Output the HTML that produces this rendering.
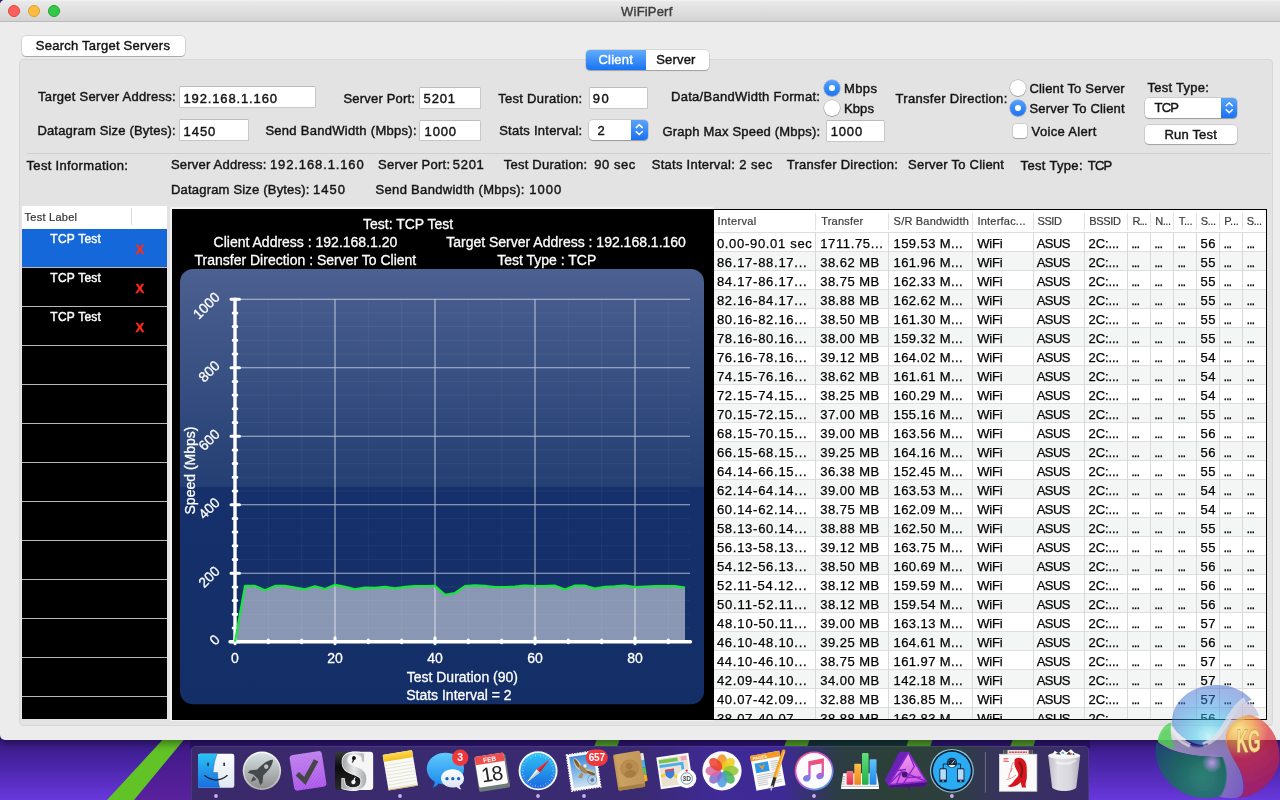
<!DOCTYPE html>
<html lang="en">
<head>
<meta charset="utf-8">
<title>WiFiPerf</title>
<style>
html,body{margin:0;padding:0;}
body{width:1280px;height:800px;overflow:hidden;position:relative;font-family:"Liberation Sans",sans-serif;background:#4a24a8;}
.abs{position:absolute;}
.t{position:absolute;white-space:pre;-webkit-text-stroke:0.42px currentColor;}
#wall{position:absolute;left:0;top:0;width:1280px;height:800px;}
#win{position:absolute;left:0;top:0;width:1280px;height:739.5px;background:#ececec;border-radius:5px 0 0 5px;overflow:hidden;box-shadow:0 3px 10px rgba(0,0,0,.45);}
#tbar{position:absolute;left:0;top:0;width:1280px;height:21px;background:linear-gradient(#f3f3f3 0,#eaeaea 1.2px,#d3d3d3);border-bottom:1px solid #bababa;box-sizing:content-box;}
.tl{position:absolute;top:5px;width:12px;height:12px;border-radius:50%;box-sizing:border-box;}
#gbox{position:absolute;left:19px;top:58.5px;width:1254px;height:667px;background:#e3e3e3;border:1px solid #d8d8d8;border-radius:4px;box-sizing:border-box;}
.fld{position:absolute;background:#fff;border:1px solid #c8c8c8;border-top-color:#bcbcbc;border-radius:1.5px;box-sizing:border-box;}
.btn{position:absolute;background:#fff;border-radius:4px;box-sizing:border-box;box-shadow:0 0 0 .5px rgba(0,0,0,.18),0 1px 1px rgba(0,0,0,.22);}
.radio{position:absolute;width:16px;height:16px;border-radius:50%;box-sizing:border-box;background:#fff;box-shadow:0 0 0 .5px rgba(0,0,0,.25),0 1px 1px rgba(0,0,0,.2);}
.radio.on{background:linear-gradient(#55a2fb,#1a73f3);box-shadow:0 0 0 .5px rgba(20,80,200,.5),0 1px 1px rgba(0,0,0,.2);}
.radio.on::after{content:"";position:absolute;left:5px;top:5px;width:6px;height:6px;border-radius:50%;background:#fff;}
.sel{position:absolute;background:#fff;border-radius:4px;box-sizing:border-box;box-shadow:0 0 0 .5px rgba(0,0,0,.2),0 1px 1px rgba(0,0,0,.25);overflow:hidden;}
.sel i{position:absolute;right:0;top:0;bottom:0;width:16.5px;background:linear-gradient(#58a4fb,#1a72f2);}
#tabtext .t{-webkit-text-stroke-width:0.25px;}
.hl{position:absolute;height:1px;background:#cfcfcf;}
</style>
</head>
<body>
<svg id="wall" viewBox="0 0 1280 800">
<defs>
<linearGradient id="wv" x1="0" y1="736" x2="0" y2="800" gradientUnits="userSpaceOnUse"><stop offset="0" stop-color="#37197f"/><stop offset="0.45" stop-color="#4a25a8"/><stop offset="1" stop-color="#6838dc"/></linearGradient>
<linearGradient id="wv2" x1="0" y1="736" x2="0" y2="800" gradientUnits="userSpaceOnUse"><stop offset="0" stop-color="#3c1784"/><stop offset="1" stop-color="#5a229e"/></linearGradient>
</defs>
<rect x="0" y="0" width="1280" height="800" fill="url(#wv)"/>
<polygon points="187,736 200,736 200,800 134,800" fill="url(#wv2)"/>
<polygon points="166,736 187,736 134,800 107,800" fill="#62c326"/>
<rect x="190" y="736" width="900" height="12" fill="#2c1470"/>
<polygon points="811,736 911,736 905,747 805,747" fill="#15343a"/>
<polygon points="598,736 621,736 617,747 594,747" fill="#4f9a2a"/>
<polygon points="788,736 811,736 807,747 784,747" fill="#4f9a2a"/>
<polygon points="910,736 934,736 930,747 906,747" fill="#4f9a2a"/>
<polygon points="1014,736 1037,736 1033,747 1010,747" fill="#4f9a2a"/>
</svg>

<div id="win">
 <div id="tbar">
  <div class="tl" style="left:8px;background:#fc605c;border:.5px solid #e0443e;"></div>
  <div class="tl" style="left:28px;background:#fdbc40;border:.5px solid #dea123;"></div>
  <div class="tl" style="left:48px;background:#34c84a;border:.5px solid #1ba62d;"></div>
 </div>
 <div id="gbox"></div>
 <!-- search button -->
 <div class="btn" style="left:21.5px;top:36px;width:163px;height:19.5px;"></div>
 <!-- tabs -->
 <div class="btn" style="left:585.5px;top:49.5px;width:123px;height:20px;overflow:hidden;"><div class="abs" style="left:0;top:0;width:60px;height:20px;background:linear-gradient(#63acfb,#1873f4);"></div></div>
 <!-- fields -->
 <div class="fld" style="left:179px;top:86.2px;width:136.5px;height:21.5px;"></div>
 <div class="fld" style="left:419.4px;top:87.4px;width:61.6px;height:21.4px;"></div>
 <div class="fld" style="left:588.9px;top:87.4px;width:59px;height:21.4px;"></div>
 <div class="fld" style="left:179px;top:119.4px;width:69.8px;height:21.4px;"></div>
 <div class="fld" style="left:419.4px;top:119.5px;width:61.6px;height:21.4px;"></div>
 <div class="fld" style="left:825.6px;top:120.4px;width:59.6px;height:21.4px;"></div>
 <!-- selects -->
 <div class="sel" style="left:589px;top:120px;width:58.6px;height:20px;"><i></i>
  <svg class="abs" style="right:0;top:0.4px" width="16.5" height="19.2" viewBox="0 0 16.5 19.2"><path d="M5.2 7.6 8.25 4.6 11.3 7.6M5.2 11.6 8.25 14.6 11.3 11.6" fill="none" stroke="#fff" stroke-width="1.5" stroke-linecap="round" stroke-linejoin="round"/></svg></div>
 <div class="sel" style="left:1145px;top:97.5px;width:92px;height:20px;"><i></i>
  <svg class="abs" style="right:0;top:0" width="16.5" height="19.4" viewBox="0 0 16.5 19.4"><path d="M5.2 7.7 8.25 4.7 11.3 7.7M5.2 11.7 8.25 14.7 11.3 11.7" fill="none" stroke="#fff" stroke-width="1.5" stroke-linecap="round" stroke-linejoin="round"/></svg></div>
 <!-- run test -->
 <div class="btn" style="left:1145px;top:124.8px;width:92px;height:19.4px;"></div>
 <!-- radios -->
 <div class="radio on" style="left:824.4px;top:79.8px;"></div>
 <div class="radio" style="left:824.4px;top:99.8px;"></div>
 <div class="radio" style="left:1009.8px;top:80.1px;"></div>
 <div class="radio on" style="left:1009.8px;top:100.1px;"></div>
 <!-- checkbox -->
 <div class="btn" style="left:1013px;top:124.4px;width:14px;height:14px;border-radius:3px;"></div>
 <!-- separator -->
 <div class="hl" style="left:27px;top:153px;width:1244px;"></div>

 <!-- list -->
 <div class="abs" style="left:21.8px;top:206.3px;width:145.5px;height:512.5px;background:#000;overflow:hidden;">
  <div class="abs" style="left:0;top:0;width:145.4px;height:22.4px;background:#fff;"></div>
  <div class="abs" style="left:109.7px;top:2px;width:1px;height:17px;background:#dcdcdc;"></div>
  <div class="abs" style="left:0;top:22.4px;width:145.4px;height:38.4px;background:#1568d9;"></div>
  <div class="abs" style="left:0;top:60.5px;width:145.4px;height:1.2px;background:#b9b9b9;"></div><div class="abs" style="left:0;top:99.6px;width:145.4px;height:1.2px;background:#b9b9b9;"></div><div class="abs" style="left:0;top:138.6px;width:145.4px;height:1.2px;background:#b9b9b9;"></div><div class="abs" style="left:0;top:177.7px;width:145.4px;height:1.2px;background:#b9b9b9;"></div><div class="abs" style="left:0;top:216.7px;width:145.4px;height:1.2px;background:#b9b9b9;"></div><div class="abs" style="left:0;top:255.8px;width:145.4px;height:1.2px;background:#b9b9b9;"></div><div class="abs" style="left:0;top:294.8px;width:145.4px;height:1.2px;background:#b9b9b9;"></div><div class="abs" style="left:0;top:333.9px;width:145.4px;height:1.2px;background:#b9b9b9;"></div><div class="abs" style="left:0;top:372.9px;width:145.4px;height:1.2px;background:#b9b9b9;"></div><div class="abs" style="left:0;top:411.9px;width:145.4px;height:1.2px;background:#b9b9b9;"></div><div class="abs" style="left:0;top:451.0px;width:145.4px;height:1.2px;background:#b9b9b9;"></div><div class="abs" style="left:0;top:490.0px;width:145.4px;height:1.2px;background:#b9b9b9;"></div>
 </div>
 <!-- graph panel + table backgrounds -->
 <div class="abs" style="left:169.8px;top:206.8px;width:543.4px;height:514px;background:#f1f1f1;"></div>
 <div class="abs" style="left:172px;top:209px;width:541px;height:510.6px;background:#000;"></div>
 <div class="abs" style="left:713px;top:208.6px;width:554px;height:511px;background:#000;"></div>
<div class="abs" style="left:714.2px;top:209.8px;width:551.6px;height:509px;background:#fff;overflow:hidden;">
<div class="abs" style="left:0;top:22.5px;width:552px;height:19px;background:#fff;border-top:1px solid #dedede;box-sizing:border-box;"></div>
<div class="abs" style="left:0;top:41.5px;width:552px;height:19px;background:#f4f5f5;border-top:1px solid #dedede;box-sizing:border-box;"></div>
<div class="abs" style="left:0;top:60.5px;width:552px;height:19px;background:#fff;border-top:1px solid #dedede;box-sizing:border-box;"></div>
<div class="abs" style="left:0;top:79.5px;width:552px;height:19px;background:#f4f5f5;border-top:1px solid #dedede;box-sizing:border-box;"></div>
<div class="abs" style="left:0;top:98.5px;width:552px;height:19px;background:#fff;border-top:1px solid #dedede;box-sizing:border-box;"></div>
<div class="abs" style="left:0;top:117.5px;width:552px;height:19px;background:#f4f5f5;border-top:1px solid #dedede;box-sizing:border-box;"></div>
<div class="abs" style="left:0;top:136.5px;width:552px;height:19px;background:#fff;border-top:1px solid #dedede;box-sizing:border-box;"></div>
<div class="abs" style="left:0;top:155.5px;width:552px;height:19px;background:#f4f5f5;border-top:1px solid #dedede;box-sizing:border-box;"></div>
<div class="abs" style="left:0;top:174.5px;width:552px;height:19px;background:#fff;border-top:1px solid #dedede;box-sizing:border-box;"></div>
<div class="abs" style="left:0;top:193.5px;width:552px;height:19px;background:#f4f5f5;border-top:1px solid #dedede;box-sizing:border-box;"></div>
<div class="abs" style="left:0;top:212.5px;width:552px;height:19px;background:#fff;border-top:1px solid #dedede;box-sizing:border-box;"></div>
<div class="abs" style="left:0;top:231.5px;width:552px;height:19px;background:#f4f5f5;border-top:1px solid #dedede;box-sizing:border-box;"></div>
<div class="abs" style="left:0;top:250.5px;width:552px;height:19px;background:#fff;border-top:1px solid #dedede;box-sizing:border-box;"></div>
<div class="abs" style="left:0;top:269.5px;width:552px;height:19px;background:#f4f5f5;border-top:1px solid #dedede;box-sizing:border-box;"></div>
<div class="abs" style="left:0;top:288.5px;width:552px;height:19px;background:#fff;border-top:1px solid #dedede;box-sizing:border-box;"></div>
<div class="abs" style="left:0;top:307.5px;width:552px;height:19px;background:#f4f5f5;border-top:1px solid #dedede;box-sizing:border-box;"></div>
<div class="abs" style="left:0;top:326.5px;width:552px;height:19px;background:#fff;border-top:1px solid #dedede;box-sizing:border-box;"></div>
<div class="abs" style="left:0;top:345.5px;width:552px;height:19px;background:#f4f5f5;border-top:1px solid #dedede;box-sizing:border-box;"></div>
<div class="abs" style="left:0;top:364.5px;width:552px;height:19px;background:#fff;border-top:1px solid #dedede;box-sizing:border-box;"></div>
<div class="abs" style="left:0;top:383.5px;width:552px;height:19px;background:#f4f5f5;border-top:1px solid #dedede;box-sizing:border-box;"></div>
<div class="abs" style="left:0;top:402.5px;width:552px;height:19px;background:#fff;border-top:1px solid #dedede;box-sizing:border-box;"></div>
<div class="abs" style="left:0;top:421.5px;width:552px;height:19px;background:#f4f5f5;border-top:1px solid #dedede;box-sizing:border-box;"></div>
<div class="abs" style="left:0;top:440.5px;width:552px;height:19px;background:#fff;border-top:1px solid #dedede;box-sizing:border-box;"></div>
<div class="abs" style="left:0;top:459.5px;width:552px;height:19px;background:#f4f5f5;border-top:1px solid #dedede;box-sizing:border-box;"></div>
<div class="abs" style="left:0;top:478.5px;width:552px;height:19px;background:#fff;border-top:1px solid #dedede;box-sizing:border-box;"></div>
<div class="abs" style="left:0;top:497.5px;width:552px;height:19px;background:#f4f5f5;border-top:1px solid #dedede;box-sizing:border-box;"></div>
<div class="abs" style="left:100.8px;top:22.5px;width:1px;height:490px;background:#d9d9d9;"></div>
<div class="abs" style="left:100.8px;top:3px;width:1px;height:17px;background:#e2e2e2;"></div>
<div class="abs" style="left:173.9px;top:22.5px;width:1px;height:490px;background:#d9d9d9;"></div>
<div class="abs" style="left:173.9px;top:3px;width:1px;height:17px;background:#e2e2e2;"></div>
<div class="abs" style="left:257.9px;top:22.5px;width:1px;height:490px;background:#d9d9d9;"></div>
<div class="abs" style="left:257.9px;top:3px;width:1px;height:17px;background:#e2e2e2;"></div>
<div class="abs" style="left:318.7px;top:22.5px;width:1px;height:490px;background:#d9d9d9;"></div>
<div class="abs" style="left:318.7px;top:3px;width:1px;height:17px;background:#e2e2e2;"></div>
<div class="abs" style="left:370.0px;top:22.5px;width:1px;height:490px;background:#d9d9d9;"></div>
<div class="abs" style="left:370.0px;top:3px;width:1px;height:17px;background:#e2e2e2;"></div>
<div class="abs" style="left:412.8px;top:22.5px;width:1px;height:490px;background:#d9d9d9;"></div>
<div class="abs" style="left:412.8px;top:3px;width:1px;height:17px;background:#e2e2e2;"></div>
<div class="abs" style="left:435.8px;top:22.5px;width:1px;height:490px;background:#d9d9d9;"></div>
<div class="abs" style="left:435.8px;top:3px;width:1px;height:17px;background:#e2e2e2;"></div>
<div class="abs" style="left:458.9px;top:22.5px;width:1px;height:490px;background:#d9d9d9;"></div>
<div class="abs" style="left:458.9px;top:3px;width:1px;height:17px;background:#e2e2e2;"></div>
<div class="abs" style="left:482.0px;top:22.5px;width:1px;height:490px;background:#d9d9d9;"></div>
<div class="abs" style="left:482.0px;top:3px;width:1px;height:17px;background:#e2e2e2;"></div>
<div class="abs" style="left:504.9px;top:22.5px;width:1px;height:490px;background:#d9d9d9;"></div>
<div class="abs" style="left:504.9px;top:3px;width:1px;height:17px;background:#e2e2e2;"></div>
<div class="abs" style="left:527.9px;top:22.5px;width:1px;height:490px;background:#d9d9d9;"></div>
<div class="abs" style="left:527.9px;top:3px;width:1px;height:17px;background:#e2e2e2;"></div>
</div>
 <svg class="abs" style="left:0;top:0" width="1280" height="739" viewBox="0 0 1280 739" font-family="'Liberation Sans', sans-serif">
 <defs><linearGradient id="gg" x1="0" y1="0" x2="0" y2="1">
<stop offset="0" stop-color="#4c6091"/><stop offset="0.5" stop-color="#243f73"/><stop offset="0.5" stop-color="#15306a"/><stop offset="1" stop-color="#142f68"/></linearGradient></defs>
<rect x="180" y="269" width="524" height="435.3" rx="13" ry="13" fill="url(#gg)"/>
<path d="M235.0 628.0H690.0M235.0 614.3H690.0M235.0 600.6H690.0M235.0 586.9H690.0M235.0 559.5H690.0M235.0 545.8H690.0M235.0 532.1H690.0M235.0 518.4H690.0M235.0 491.0H690.0M235.0 477.3H690.0M235.0 463.6H690.0M235.0 449.9H690.0M235.0 422.5H690.0M235.0 408.8H690.0M235.0 395.1H690.0M235.0 381.4H690.0M235.0 354.0H690.0M235.0 340.3H690.0M235.0 326.6H690.0M235.0 312.9H690.0M268.3 299.2V641.7M301.7 299.2V641.7M368.3 299.2V641.7M401.7 299.2V641.7M468.3 299.2V641.7M501.7 299.2V641.7M568.3 299.2V641.7M601.7 299.2V641.7M668.3 299.2V641.7" stroke="#fff" stroke-opacity="0.05" stroke-width="1" fill="none"/>
<path d="M235.0 573.2H690.0M235.0 504.7H690.0M235.0 436.2H690.0M235.0 367.7H690.0M235.0 299.2H690.0M335.0 299.2V641.7M435.0 299.2V641.7M535.0 299.2V641.7M635.0 299.2V641.7" stroke="#fff" stroke-opacity="0.62" stroke-width="1.1" fill="none"/>
<path d="M235.0 299.2V641.7M230.0 641.7H690.5" stroke="#fff" stroke-width="3.4" stroke-linecap="round" fill="none"/>
<path d="M231.0 641.7h8.5M233.2 628.0h3.6M233.2 614.3h3.6M233.2 600.6h3.6M233.2 586.9h3.6M231.0 573.2h8.5M233.2 559.5h3.6M233.2 545.8h3.6M233.2 532.1h3.6M233.2 518.4h3.6M231.0 504.7h8.5M233.2 491.0h3.6M233.2 477.3h3.6M233.2 463.6h3.6M233.2 449.9h3.6M231.0 436.2h8.5M233.2 422.5h3.6M233.2 408.8h3.6M233.2 395.1h3.6M233.2 381.4h3.6M231.0 367.7h8.5M233.2 354.0h3.6M233.2 340.3h3.6M233.2 326.6h3.6M233.2 312.9h3.6M231.0 299.2h8.5M235.0 637.7v6M268.3 640.1v2.6M301.7 640.1v2.6M335.0 637.7v6M368.3 640.1v2.6M401.7 640.1v2.6M435.0 637.7v6M468.3 640.1v2.6M501.7 640.1v2.6M535.0 637.7v6M568.3 640.1v2.6M601.7 640.1v2.6M635.0 637.7v6M668.3 640.1v2.6" stroke="#fff" stroke-width="3" stroke-linecap="round" fill="none"/>
<polygon points="235.0,641.7 245.0,585.9 255.0,585.9 265.0,590.3 275.0,585.9 285.0,585.9 295.0,587.6 305.0,589.3 315.0,586.2 325.0,589.0 335.0,584.8 345.0,586.9 355.0,589.3 365.0,587.6 375.0,587.9 385.0,586.9 395.0,588.3 405.0,586.9 415.0,586.2 425.0,586.0 435.0,585.9 445.0,594.8 455.0,593.0 465.0,586.2 475.0,585.3 485.0,585.8 495.0,587.1 505.0,587.0 515.0,586.7 525.0,585.6 535.0,586.0 545.0,586.2 555.0,585.7 565.0,589.5 575.0,585.5 585.0,585.7 595.0,588.6 605.0,586.8 615.0,586.3 625.0,585.5 635.0,587.1 645.0,586.5 655.0,586.0 665.0,586.1 675.0,586.2 685.0,587.6 685.0,641.7 235.0,641.7" fill="#fff" fill-opacity="0.5"/>
<polyline points="235.0,641.7 245.0,585.9 255.0,585.9 265.0,590.3 275.0,585.9 285.0,585.9 295.0,587.6 305.0,589.3 315.0,586.2 325.0,589.0 335.0,584.8 345.0,586.9 355.0,589.3 365.0,587.6 375.0,587.9 385.0,586.9 395.0,588.3 405.0,586.9 415.0,586.2 425.0,586.0 435.0,585.9 445.0,594.8 455.0,593.0 465.0,586.2 475.0,585.3 485.0,585.8 495.0,587.1 505.0,587.0 515.0,586.7 525.0,585.6 535.0,586.0 545.0,586.2 555.0,585.7 565.0,589.5 575.0,585.5 585.0,585.7 595.0,588.6 605.0,586.8 615.0,586.3 625.0,585.5 635.0,587.1 645.0,586.5 655.0,586.0 665.0,586.1 675.0,586.2 685.0,587.6" fill="none" stroke="#16e83a" stroke-width="2.2" stroke-linejoin="round"/>
<g fill="#fff" font-size="14px" stroke="#fff" stroke-width="0.3">
<text transform="translate(217.2 636.9) rotate(-45)" text-anchor="end" dy="0.36em">0</text>
<text transform="translate(217.2 568.4) rotate(-45)" text-anchor="end" dy="0.36em">200</text>
<text transform="translate(217.2 499.9) rotate(-45)" text-anchor="end" dy="0.36em">400</text>
<text transform="translate(217.2 431.4) rotate(-45)" text-anchor="end" dy="0.36em">600</text>
<text transform="translate(217.2 362.9) rotate(-45)" text-anchor="end" dy="0.36em">800</text>
<text transform="translate(217.2 294.4) rotate(-45)" text-anchor="end" dy="0.36em">1000</text>
<text x="235.0" y="662.6" text-anchor="middle">0</text>
<text x="335.0" y="662.6" text-anchor="middle">20</text>
<text x="435.0" y="662.6" text-anchor="middle">40</text>
<text x="535.0" y="662.6" text-anchor="middle">60</text>
<text x="635.0" y="662.6" text-anchor="middle">80</text>
<text transform="translate(195.3 470.5) rotate(-90)" text-anchor="middle">Speed (Mbps)</text>
<text x="406.7" y="682.3">Test Duration (90)</text>
<text x="406.2" y="700.4">Stats Interval = 2</text>
<text x="363" y="228.7">Test: TCP Test</text>
<text x="213.6" y="247">Client Address : 192.168.1.20</text>
<text x="446.2" y="246.8">Target Server Address : 192.168.1.160</text>
<text x="194.5" y="264.7">Transfer Direction : Server To Client</text>
<text x="497.2" y="264.8">Test Type : TCP</text>
</g>
 </svg>
 <span class="t" style="left:621.1px;top:3.0px;font-size:13px;line-height:17px;color:#3f3f3f;letter-spacing:0.19px;">WiFiPerf</span>
<span class="t" style="left:35.8px;top:36.7px;font-size:13px;line-height:17px;color:#141414;letter-spacing:0.25px;">Search Target Servers</span>
<span class="t" style="left:598.4px;top:50.7px;font-size:13px;line-height:17px;color:#fff;letter-spacing:0.23px;">Client</span>
<span class="t" style="left:656.2px;top:50.7px;font-size:13px;line-height:17px;color:#141414;letter-spacing:0.18px;">Server</span>
<span class="t" style="left:37.9px;top:88.4px;font-size:13px;line-height:17px;color:#141414;letter-spacing:0.26px;">Target Server Address:</span>
<span class="t" style="left:183.5px;top:89.7px;font-size:13px;line-height:17px;color:#141414;letter-spacing:0.86px;">192.168.1.160</span>
<span class="t" style="left:343.5px;top:89.5px;font-size:13px;line-height:17px;color:#141414;letter-spacing:0.19px;">Server Port:</span>
<span class="t" style="left:423.6px;top:90.2px;font-size:13px;line-height:17px;color:#141414;letter-spacing:0.83px;">5201</span>
<span class="t" style="left:498.2px;top:89.5px;font-size:13px;line-height:17px;color:#141414;letter-spacing:0.29px;">Test Duration:</span>
<span class="t" style="left:592.7px;top:90.2px;font-size:13px;line-height:17px;color:#141414;letter-spacing:1.53px;">90</span>
<span class="t" style="left:671.0px;top:87.6px;font-size:13px;line-height:17px;color:#141414;letter-spacing:0.28px;">Data/BandWidth Format:</span>
<span class="t" style="left:843.9px;top:80.0px;font-size:13px;line-height:17px;color:#141414;letter-spacing:0.43px;">Mbps</span>
<span class="t" style="left:843.9px;top:100.0px;font-size:13px;line-height:17px;color:#141414;letter-spacing:0.15px;">Kbps</span>
<span class="t" style="left:895.6px;top:90.1px;font-size:13px;line-height:17px;color:#141414;letter-spacing:0.29px;">Transfer Direction:</span>
<span class="t" style="left:1029.4px;top:80.1px;font-size:13px;line-height:17px;color:#141414;letter-spacing:0.20px;">Client To Server</span>
<span class="t" style="left:1029.4px;top:100.1px;font-size:13px;line-height:17px;color:#141414;letter-spacing:0.20px;">Server To Client</span>
<span class="t" style="left:1031.6px;top:122.9px;font-size:13px;line-height:17px;color:#141414;letter-spacing:0.33px;">Voice Alert</span>
<span class="t" style="left:1147.5px;top:79.2px;font-size:13px;line-height:17px;color:#141414;letter-spacing:0.25px;">Test Type:</span>
<span class="t" style="left:1154.4px;top:98.9px;font-size:13px;line-height:17px;color:#141414;letter-spacing:-0.70px;">TCP</span>
<span class="t" style="left:1164.4px;top:126.1px;font-size:13px;line-height:17px;color:#141414;letter-spacing:0.20px;">Run Test</span>
<span class="t" style="left:37.4px;top:121.8px;font-size:13px;line-height:17px;color:#141414;letter-spacing:0.18px;">Datagram Size (Bytes):</span>
<span class="t" style="left:183.5px;top:122.6px;font-size:13px;line-height:17px;color:#141414;letter-spacing:0.96px;">1450</span>
<span class="t" style="left:265.4px;top:122.4px;font-size:13px;line-height:17px;color:#141414;letter-spacing:0.28px;">Send BandWidth (Mbps):</span>
<span class="t" style="left:424.6px;top:123.0px;font-size:13px;line-height:17px;color:#141414;letter-spacing:0.83px;">1000</span>
<span class="t" style="left:499.2px;top:122.4px;font-size:13px;line-height:17px;color:#141414;letter-spacing:0.25px;">Stats Interval:</span>
<span class="t" style="left:597.5px;top:121.8px;font-size:13px;line-height:17px;color:#141414;">2</span>
<span class="t" style="left:662.5px;top:123.2px;font-size:13px;line-height:17px;color:#141414;letter-spacing:0.20px;">Graph Max Speed (Mbps):</span>
<span class="t" style="left:830.7px;top:123.4px;font-size:13px;line-height:17px;color:#141414;letter-spacing:0.86px;">1000</span>
<span class="t" style="left:26.5px;top:157.0px;font-size:13px;line-height:17px;color:#141414;letter-spacing:0.33px;">Test Information:</span>
<span class="t" style="left:171.0px;top:155.8px;font-size:13px;line-height:17px;color:#141414;letter-spacing:0.20px;">Server Address:</span>
<span class="t" style="left:270.0px;top:155.8px;font-size:13px;line-height:17px;color:#141414;letter-spacing:0.88px;">192.168.1.160</span>
<span class="t" style="left:378.0px;top:155.8px;font-size:13px;line-height:17px;color:#141414;letter-spacing:0.24px;">Server Port:</span>
<span class="t" style="left:452.8px;top:155.8px;font-size:13px;line-height:17px;color:#141414;letter-spacing:0.69px;">5201</span>
<span class="t" style="left:503.7px;top:155.8px;font-size:13px;line-height:17px;color:#141414;letter-spacing:0.24px;">Test Duration:</span>
<span class="t" style="left:594.3px;top:155.8px;font-size:13px;line-height:17px;color:#141414;letter-spacing:0.54px;">90 sec</span>
<span class="t" style="left:651.8px;top:156.0px;font-size:13px;line-height:17px;color:#141414;letter-spacing:0.25px;">Stats Interval:</span>
<span class="t" style="left:739.3px;top:156.0px;font-size:13px;line-height:17px;color:#141414;letter-spacing:0.46px;">2 sec</span>
<span class="t" style="left:786.8px;top:156.4px;font-size:13px;line-height:17px;color:#141414;letter-spacing:0.26px;">Transfer Direction:</span>
<span class="t" style="left:908.1px;top:156.4px;font-size:13px;line-height:17px;color:#141414;letter-spacing:0.24px;">Server To Client</span>
<span class="t" style="left:1020.6px;top:156.6px;font-size:13px;line-height:17px;color:#141414;letter-spacing:0.32px;">Test Type:</span>
<span class="t" style="left:1087.8px;top:156.6px;font-size:13px;line-height:17px;color:#141414;letter-spacing:-0.80px;">TCP</span>
<span class="t" style="left:171.0px;top:180.8px;font-size:13px;line-height:17px;color:#141414;letter-spacing:0.19px;">Datagram Size (Bytes):</span>
<span class="t" style="left:313.0px;top:180.8px;font-size:13px;line-height:17px;color:#141414;letter-spacing:1.03px;">1450</span>
<span class="t" style="left:375.6px;top:180.8px;font-size:13px;line-height:17px;color:#141414;letter-spacing:0.31px;">Send Bandwidth (Mbps):</span>
<span class="t" style="left:529.3px;top:180.8px;font-size:13px;line-height:17px;color:#141414;letter-spacing:1.03px;">1000</span>
<span class="t" style="left:24.6px;top:209.8px;font-size:11px;line-height:14px;color:#333;letter-spacing:0.25px;-webkit-text-stroke-width:0.2px;">Test Label</span>
<span class="t" style="left:50.3px;top:230.6px;font-size:12px;line-height:16px;color:#fff;letter-spacing:0.25px;">TCP Test</span>
<span class="t" style="left:135.6px;top:241.0px;font-size:13px;line-height:17px;color:#ff2a1c;font-weight:700;">X</span>
<span class="t" style="left:50.3px;top:269.6px;font-size:12px;line-height:16px;color:#fff;letter-spacing:0.25px;">TCP Test</span>
<span class="t" style="left:135.6px;top:280.0px;font-size:13px;line-height:17px;color:#ff2a1c;font-weight:700;">X</span>
<span class="t" style="left:50.3px;top:308.6px;font-size:12px;line-height:16px;color:#fff;letter-spacing:0.25px;">TCP Test</span>
<span class="t" style="left:135.6px;top:319.0px;font-size:13px;line-height:17px;color:#ff2a1c;font-weight:700;">X</span>
<span class="t" style="left:717.6px;top:213.5px;font-size:11px;line-height:14px;color:#3a3a3a;letter-spacing:0.37px;-webkit-text-stroke-width:0.2px;">Interval</span>
<span class="t" style="left:821.2px;top:213.5px;font-size:11px;line-height:14px;color:#3a3a3a;letter-spacing:0.22px;-webkit-text-stroke-width:0.2px;">Transfer</span>
<span class="t" style="left:893.6px;top:213.5px;font-size:11px;line-height:14px;color:#3a3a3a;letter-spacing:0.20px;-webkit-text-stroke-width:0.2px;">S/R Bandwidth</span>
<span class="t" style="left:977.5px;top:213.5px;font-size:11px;line-height:14px;color:#3a3a3a;letter-spacing:0.21px;-webkit-text-stroke-width:0.2px;">Interfac...</span>
<span class="t" style="left:1037.6px;top:213.5px;font-size:11px;line-height:14px;color:#3a3a3a;letter-spacing:-0.46px;-webkit-text-stroke-width:0.2px;">SSID</span>
<span class="t" style="left:1089.3px;top:213.5px;font-size:11px;line-height:14px;color:#3a3a3a;letter-spacing:-0.33px;-webkit-text-stroke-width:0.2px;">BSSID</span>
<span class="t" style="left:1132.4px;top:213.5px;font-size:11px;line-height:14px;color:#3a3a3a;letter-spacing:-0.77px;-webkit-text-stroke-width:0.2px;">R...</span>
<span class="t" style="left:1155.3px;top:213.5px;font-size:11px;line-height:14px;color:#3a3a3a;letter-spacing:-0.48px;-webkit-text-stroke-width:0.2px;">N...</span>
<span class="t" style="left:1178.7px;top:213.5px;font-size:11px;line-height:14px;color:#3a3a3a;letter-spacing:-0.29px;-webkit-text-stroke-width:0.2px;">T...</span>
<span class="t" style="left:1200.8px;top:213.5px;font-size:11px;line-height:14px;color:#3a3a3a;letter-spacing:-0.41px;-webkit-text-stroke-width:0.2px;">S...</span>
<span class="t" style="left:1224.2px;top:213.5px;font-size:11px;line-height:14px;color:#3a3a3a;letter-spacing:-0.13px;-webkit-text-stroke-width:0.2px;">P...</span>
<span class="t" style="left:1246.8px;top:213.5px;font-size:11px;line-height:14px;color:#3a3a3a;letter-spacing:-0.44px;-webkit-text-stroke-width:0.2px;">S...</span>
 <div class="abs" id="tabtext" style="left:0;top:0;width:1266px;height:719.3px;overflow:hidden;">
 <span class="t" style="left:716.9px;top:235.0px;font-size:13px;line-height:17px;color:#000;letter-spacing:0.69px;">0.00-90.01 sec</span>
<span class="t" style="left:820.2px;top:235.0px;font-size:13px;line-height:17px;color:#000;letter-spacing:0.64px;">1711.75...</span>
<span class="t" style="left:893.6px;top:235.0px;font-size:13px;line-height:17px;color:#000;letter-spacing:0.40px;">159.53 M...</span>
<span class="t" style="left:977.2px;top:235.0px;font-size:13px;line-height:17px;color:#000;letter-spacing:-0.17px;">WiFi</span>
<span class="t" style="left:1036.8px;top:235.0px;font-size:13px;line-height:17px;color:#000;letter-spacing:-0.60px;">ASUS</span>
<span class="t" style="left:1088.6px;top:235.0px;font-size:13px;line-height:17px;color:#000;letter-spacing:-0.10px;">2C:...</span>
<span class="t" style="left:1131.3px;top:235.0px;font-size:13px;line-height:17px;color:#000;letter-spacing:-1.07px;">...</span>
<span class="t" style="left:1154.3px;top:235.0px;font-size:13px;line-height:17px;color:#000;letter-spacing:-1.07px;">...</span>
<span class="t" style="left:1177.5px;top:235.0px;font-size:13px;line-height:17px;color:#000;letter-spacing:-1.07px;">...</span>
<span class="t" style="left:1223.4px;top:235.0px;font-size:13px;line-height:17px;color:#000;letter-spacing:-1.07px;">...</span>
<span class="t" style="left:1246.4px;top:235.0px;font-size:13px;line-height:17px;color:#000;letter-spacing:-1.07px;">...</span>
<span class="t" style="left:1200.6px;top:235.0px;font-size:13px;line-height:17px;color:#000;letter-spacing:0.53px;">56</span>
<span class="t" style="left:716.9px;top:254.0px;font-size:13px;line-height:17px;color:#000;letter-spacing:0.73px;">86.17-88.17...</span>
<span class="t" style="left:820.2px;top:254.0px;font-size:13px;line-height:17px;color:#000;letter-spacing:0.48px;">38.62 MB</span>
<span class="t" style="left:893.6px;top:254.0px;font-size:13px;line-height:17px;color:#000;letter-spacing:0.40px;">161.96 M...</span>
<span class="t" style="left:977.2px;top:254.0px;font-size:13px;line-height:17px;color:#000;letter-spacing:-0.17px;">WiFi</span>
<span class="t" style="left:1036.8px;top:254.0px;font-size:13px;line-height:17px;color:#000;letter-spacing:-0.60px;">ASUS</span>
<span class="t" style="left:1088.6px;top:254.0px;font-size:13px;line-height:17px;color:#000;letter-spacing:-0.10px;">2C:...</span>
<span class="t" style="left:1131.3px;top:254.0px;font-size:13px;line-height:17px;color:#000;letter-spacing:-1.07px;">...</span>
<span class="t" style="left:1154.3px;top:254.0px;font-size:13px;line-height:17px;color:#000;letter-spacing:-1.07px;">...</span>
<span class="t" style="left:1177.5px;top:254.0px;font-size:13px;line-height:17px;color:#000;letter-spacing:-1.07px;">...</span>
<span class="t" style="left:1223.4px;top:254.0px;font-size:13px;line-height:17px;color:#000;letter-spacing:-1.07px;">...</span>
<span class="t" style="left:1246.4px;top:254.0px;font-size:13px;line-height:17px;color:#000;letter-spacing:-1.07px;">...</span>
<span class="t" style="left:1200.6px;top:254.0px;font-size:13px;line-height:17px;color:#000;letter-spacing:0.53px;">55</span>
<span class="t" style="left:716.9px;top:273.0px;font-size:13px;line-height:17px;color:#000;letter-spacing:0.73px;">84.17-86.17...</span>
<span class="t" style="left:820.2px;top:273.0px;font-size:13px;line-height:17px;color:#000;letter-spacing:0.48px;">38.75 MB</span>
<span class="t" style="left:893.6px;top:273.0px;font-size:13px;line-height:17px;color:#000;letter-spacing:0.40px;">162.33 M...</span>
<span class="t" style="left:977.2px;top:273.0px;font-size:13px;line-height:17px;color:#000;letter-spacing:-0.17px;">WiFi</span>
<span class="t" style="left:1036.8px;top:273.0px;font-size:13px;line-height:17px;color:#000;letter-spacing:-0.60px;">ASUS</span>
<span class="t" style="left:1088.6px;top:273.0px;font-size:13px;line-height:17px;color:#000;letter-spacing:-0.10px;">2C:...</span>
<span class="t" style="left:1131.3px;top:273.0px;font-size:13px;line-height:17px;color:#000;letter-spacing:-1.07px;">...</span>
<span class="t" style="left:1154.3px;top:273.0px;font-size:13px;line-height:17px;color:#000;letter-spacing:-1.07px;">...</span>
<span class="t" style="left:1177.5px;top:273.0px;font-size:13px;line-height:17px;color:#000;letter-spacing:-1.07px;">...</span>
<span class="t" style="left:1223.4px;top:273.0px;font-size:13px;line-height:17px;color:#000;letter-spacing:-1.07px;">...</span>
<span class="t" style="left:1246.4px;top:273.0px;font-size:13px;line-height:17px;color:#000;letter-spacing:-1.07px;">...</span>
<span class="t" style="left:1200.6px;top:273.0px;font-size:13px;line-height:17px;color:#000;letter-spacing:0.53px;">55</span>
<span class="t" style="left:716.9px;top:292.0px;font-size:13px;line-height:17px;color:#000;letter-spacing:0.73px;">82.16-84.17...</span>
<span class="t" style="left:820.2px;top:292.0px;font-size:13px;line-height:17px;color:#000;letter-spacing:0.48px;">38.88 MB</span>
<span class="t" style="left:893.6px;top:292.0px;font-size:13px;line-height:17px;color:#000;letter-spacing:0.40px;">162.62 M...</span>
<span class="t" style="left:977.2px;top:292.0px;font-size:13px;line-height:17px;color:#000;letter-spacing:-0.17px;">WiFi</span>
<span class="t" style="left:1036.8px;top:292.0px;font-size:13px;line-height:17px;color:#000;letter-spacing:-0.60px;">ASUS</span>
<span class="t" style="left:1088.6px;top:292.0px;font-size:13px;line-height:17px;color:#000;letter-spacing:-0.10px;">2C:...</span>
<span class="t" style="left:1131.3px;top:292.0px;font-size:13px;line-height:17px;color:#000;letter-spacing:-1.07px;">...</span>
<span class="t" style="left:1154.3px;top:292.0px;font-size:13px;line-height:17px;color:#000;letter-spacing:-1.07px;">...</span>
<span class="t" style="left:1177.5px;top:292.0px;font-size:13px;line-height:17px;color:#000;letter-spacing:-1.07px;">...</span>
<span class="t" style="left:1223.4px;top:292.0px;font-size:13px;line-height:17px;color:#000;letter-spacing:-1.07px;">...</span>
<span class="t" style="left:1246.4px;top:292.0px;font-size:13px;line-height:17px;color:#000;letter-spacing:-1.07px;">...</span>
<span class="t" style="left:1200.6px;top:292.0px;font-size:13px;line-height:17px;color:#000;letter-spacing:0.53px;">55</span>
<span class="t" style="left:716.9px;top:311.0px;font-size:13px;line-height:17px;color:#000;letter-spacing:0.73px;">80.16-82.16...</span>
<span class="t" style="left:820.2px;top:311.0px;font-size:13px;line-height:17px;color:#000;letter-spacing:0.48px;">38.50 MB</span>
<span class="t" style="left:893.6px;top:311.0px;font-size:13px;line-height:17px;color:#000;letter-spacing:0.40px;">161.30 M...</span>
<span class="t" style="left:977.2px;top:311.0px;font-size:13px;line-height:17px;color:#000;letter-spacing:-0.17px;">WiFi</span>
<span class="t" style="left:1036.8px;top:311.0px;font-size:13px;line-height:17px;color:#000;letter-spacing:-0.60px;">ASUS</span>
<span class="t" style="left:1088.6px;top:311.0px;font-size:13px;line-height:17px;color:#000;letter-spacing:-0.10px;">2C:...</span>
<span class="t" style="left:1131.3px;top:311.0px;font-size:13px;line-height:17px;color:#000;letter-spacing:-1.07px;">...</span>
<span class="t" style="left:1154.3px;top:311.0px;font-size:13px;line-height:17px;color:#000;letter-spacing:-1.07px;">...</span>
<span class="t" style="left:1177.5px;top:311.0px;font-size:13px;line-height:17px;color:#000;letter-spacing:-1.07px;">...</span>
<span class="t" style="left:1223.4px;top:311.0px;font-size:13px;line-height:17px;color:#000;letter-spacing:-1.07px;">...</span>
<span class="t" style="left:1246.4px;top:311.0px;font-size:13px;line-height:17px;color:#000;letter-spacing:-1.07px;">...</span>
<span class="t" style="left:1200.6px;top:311.0px;font-size:13px;line-height:17px;color:#000;letter-spacing:0.53px;">55</span>
<span class="t" style="left:716.9px;top:330.0px;font-size:13px;line-height:17px;color:#000;letter-spacing:0.73px;">78.16-80.16...</span>
<span class="t" style="left:820.2px;top:330.0px;font-size:13px;line-height:17px;color:#000;letter-spacing:0.48px;">38.00 MB</span>
<span class="t" style="left:893.6px;top:330.0px;font-size:13px;line-height:17px;color:#000;letter-spacing:0.40px;">159.32 M...</span>
<span class="t" style="left:977.2px;top:330.0px;font-size:13px;line-height:17px;color:#000;letter-spacing:-0.17px;">WiFi</span>
<span class="t" style="left:1036.8px;top:330.0px;font-size:13px;line-height:17px;color:#000;letter-spacing:-0.60px;">ASUS</span>
<span class="t" style="left:1088.6px;top:330.0px;font-size:13px;line-height:17px;color:#000;letter-spacing:-0.10px;">2C:...</span>
<span class="t" style="left:1131.3px;top:330.0px;font-size:13px;line-height:17px;color:#000;letter-spacing:-1.07px;">...</span>
<span class="t" style="left:1154.3px;top:330.0px;font-size:13px;line-height:17px;color:#000;letter-spacing:-1.07px;">...</span>
<span class="t" style="left:1177.5px;top:330.0px;font-size:13px;line-height:17px;color:#000;letter-spacing:-1.07px;">...</span>
<span class="t" style="left:1223.4px;top:330.0px;font-size:13px;line-height:17px;color:#000;letter-spacing:-1.07px;">...</span>
<span class="t" style="left:1246.4px;top:330.0px;font-size:13px;line-height:17px;color:#000;letter-spacing:-1.07px;">...</span>
<span class="t" style="left:1200.6px;top:330.0px;font-size:13px;line-height:17px;color:#000;letter-spacing:0.53px;">55</span>
<span class="t" style="left:716.9px;top:349.0px;font-size:13px;line-height:17px;color:#000;letter-spacing:0.73px;">76.16-78.16...</span>
<span class="t" style="left:820.2px;top:349.0px;font-size:13px;line-height:17px;color:#000;letter-spacing:0.48px;">39.12 MB</span>
<span class="t" style="left:893.6px;top:349.0px;font-size:13px;line-height:17px;color:#000;letter-spacing:0.40px;">164.02 M...</span>
<span class="t" style="left:977.2px;top:349.0px;font-size:13px;line-height:17px;color:#000;letter-spacing:-0.17px;">WiFi</span>
<span class="t" style="left:1036.8px;top:349.0px;font-size:13px;line-height:17px;color:#000;letter-spacing:-0.60px;">ASUS</span>
<span class="t" style="left:1088.6px;top:349.0px;font-size:13px;line-height:17px;color:#000;letter-spacing:-0.10px;">2C:...</span>
<span class="t" style="left:1131.3px;top:349.0px;font-size:13px;line-height:17px;color:#000;letter-spacing:-1.07px;">...</span>
<span class="t" style="left:1154.3px;top:349.0px;font-size:13px;line-height:17px;color:#000;letter-spacing:-1.07px;">...</span>
<span class="t" style="left:1177.5px;top:349.0px;font-size:13px;line-height:17px;color:#000;letter-spacing:-1.07px;">...</span>
<span class="t" style="left:1223.4px;top:349.0px;font-size:13px;line-height:17px;color:#000;letter-spacing:-1.07px;">...</span>
<span class="t" style="left:1246.4px;top:349.0px;font-size:13px;line-height:17px;color:#000;letter-spacing:-1.07px;">...</span>
<span class="t" style="left:1200.6px;top:349.0px;font-size:13px;line-height:17px;color:#000;letter-spacing:0.53px;">54</span>
<span class="t" style="left:716.9px;top:368.0px;font-size:13px;line-height:17px;color:#000;letter-spacing:0.73px;">74.15-76.16...</span>
<span class="t" style="left:820.2px;top:368.0px;font-size:13px;line-height:17px;color:#000;letter-spacing:0.48px;">38.62 MB</span>
<span class="t" style="left:893.6px;top:368.0px;font-size:13px;line-height:17px;color:#000;letter-spacing:0.40px;">161.61 M...</span>
<span class="t" style="left:977.2px;top:368.0px;font-size:13px;line-height:17px;color:#000;letter-spacing:-0.17px;">WiFi</span>
<span class="t" style="left:1036.8px;top:368.0px;font-size:13px;line-height:17px;color:#000;letter-spacing:-0.60px;">ASUS</span>
<span class="t" style="left:1088.6px;top:368.0px;font-size:13px;line-height:17px;color:#000;letter-spacing:-0.10px;">2C:...</span>
<span class="t" style="left:1131.3px;top:368.0px;font-size:13px;line-height:17px;color:#000;letter-spacing:-1.07px;">...</span>
<span class="t" style="left:1154.3px;top:368.0px;font-size:13px;line-height:17px;color:#000;letter-spacing:-1.07px;">...</span>
<span class="t" style="left:1177.5px;top:368.0px;font-size:13px;line-height:17px;color:#000;letter-spacing:-1.07px;">...</span>
<span class="t" style="left:1223.4px;top:368.0px;font-size:13px;line-height:17px;color:#000;letter-spacing:-1.07px;">...</span>
<span class="t" style="left:1246.4px;top:368.0px;font-size:13px;line-height:17px;color:#000;letter-spacing:-1.07px;">...</span>
<span class="t" style="left:1200.6px;top:368.0px;font-size:13px;line-height:17px;color:#000;letter-spacing:0.53px;">54</span>
<span class="t" style="left:716.9px;top:387.0px;font-size:13px;line-height:17px;color:#000;letter-spacing:0.73px;">72.15-74.15...</span>
<span class="t" style="left:820.2px;top:387.0px;font-size:13px;line-height:17px;color:#000;letter-spacing:0.48px;">38.25 MB</span>
<span class="t" style="left:893.6px;top:387.0px;font-size:13px;line-height:17px;color:#000;letter-spacing:0.40px;">160.29 M...</span>
<span class="t" style="left:977.2px;top:387.0px;font-size:13px;line-height:17px;color:#000;letter-spacing:-0.17px;">WiFi</span>
<span class="t" style="left:1036.8px;top:387.0px;font-size:13px;line-height:17px;color:#000;letter-spacing:-0.60px;">ASUS</span>
<span class="t" style="left:1088.6px;top:387.0px;font-size:13px;line-height:17px;color:#000;letter-spacing:-0.10px;">2C:...</span>
<span class="t" style="left:1131.3px;top:387.0px;font-size:13px;line-height:17px;color:#000;letter-spacing:-1.07px;">...</span>
<span class="t" style="left:1154.3px;top:387.0px;font-size:13px;line-height:17px;color:#000;letter-spacing:-1.07px;">...</span>
<span class="t" style="left:1177.5px;top:387.0px;font-size:13px;line-height:17px;color:#000;letter-spacing:-1.07px;">...</span>
<span class="t" style="left:1223.4px;top:387.0px;font-size:13px;line-height:17px;color:#000;letter-spacing:-1.07px;">...</span>
<span class="t" style="left:1246.4px;top:387.0px;font-size:13px;line-height:17px;color:#000;letter-spacing:-1.07px;">...</span>
<span class="t" style="left:1200.6px;top:387.0px;font-size:13px;line-height:17px;color:#000;letter-spacing:0.53px;">54</span>
<span class="t" style="left:716.9px;top:406.0px;font-size:13px;line-height:17px;color:#000;letter-spacing:0.73px;">70.15-72.15...</span>
<span class="t" style="left:820.2px;top:406.0px;font-size:13px;line-height:17px;color:#000;letter-spacing:0.48px;">37.00 MB</span>
<span class="t" style="left:893.6px;top:406.0px;font-size:13px;line-height:17px;color:#000;letter-spacing:0.40px;">155.16 M...</span>
<span class="t" style="left:977.2px;top:406.0px;font-size:13px;line-height:17px;color:#000;letter-spacing:-0.17px;">WiFi</span>
<span class="t" style="left:1036.8px;top:406.0px;font-size:13px;line-height:17px;color:#000;letter-spacing:-0.60px;">ASUS</span>
<span class="t" style="left:1088.6px;top:406.0px;font-size:13px;line-height:17px;color:#000;letter-spacing:-0.10px;">2C:...</span>
<span class="t" style="left:1131.3px;top:406.0px;font-size:13px;line-height:17px;color:#000;letter-spacing:-1.07px;">...</span>
<span class="t" style="left:1154.3px;top:406.0px;font-size:13px;line-height:17px;color:#000;letter-spacing:-1.07px;">...</span>
<span class="t" style="left:1177.5px;top:406.0px;font-size:13px;line-height:17px;color:#000;letter-spacing:-1.07px;">...</span>
<span class="t" style="left:1223.4px;top:406.0px;font-size:13px;line-height:17px;color:#000;letter-spacing:-1.07px;">...</span>
<span class="t" style="left:1246.4px;top:406.0px;font-size:13px;line-height:17px;color:#000;letter-spacing:-1.07px;">...</span>
<span class="t" style="left:1200.6px;top:406.0px;font-size:13px;line-height:17px;color:#000;letter-spacing:0.53px;">55</span>
<span class="t" style="left:716.9px;top:425.0px;font-size:13px;line-height:17px;color:#000;letter-spacing:0.73px;">68.15-70.15...</span>
<span class="t" style="left:820.2px;top:425.0px;font-size:13px;line-height:17px;color:#000;letter-spacing:0.48px;">39.00 MB</span>
<span class="t" style="left:893.6px;top:425.0px;font-size:13px;line-height:17px;color:#000;letter-spacing:0.40px;">163.56 M...</span>
<span class="t" style="left:977.2px;top:425.0px;font-size:13px;line-height:17px;color:#000;letter-spacing:-0.17px;">WiFi</span>
<span class="t" style="left:1036.8px;top:425.0px;font-size:13px;line-height:17px;color:#000;letter-spacing:-0.60px;">ASUS</span>
<span class="t" style="left:1088.6px;top:425.0px;font-size:13px;line-height:17px;color:#000;letter-spacing:-0.10px;">2C:...</span>
<span class="t" style="left:1131.3px;top:425.0px;font-size:13px;line-height:17px;color:#000;letter-spacing:-1.07px;">...</span>
<span class="t" style="left:1154.3px;top:425.0px;font-size:13px;line-height:17px;color:#000;letter-spacing:-1.07px;">...</span>
<span class="t" style="left:1177.5px;top:425.0px;font-size:13px;line-height:17px;color:#000;letter-spacing:-1.07px;">...</span>
<span class="t" style="left:1223.4px;top:425.0px;font-size:13px;line-height:17px;color:#000;letter-spacing:-1.07px;">...</span>
<span class="t" style="left:1246.4px;top:425.0px;font-size:13px;line-height:17px;color:#000;letter-spacing:-1.07px;">...</span>
<span class="t" style="left:1200.6px;top:425.0px;font-size:13px;line-height:17px;color:#000;letter-spacing:0.53px;">56</span>
<span class="t" style="left:716.9px;top:444.0px;font-size:13px;line-height:17px;color:#000;letter-spacing:0.73px;">66.15-68.15...</span>
<span class="t" style="left:820.2px;top:444.0px;font-size:13px;line-height:17px;color:#000;letter-spacing:0.48px;">39.25 MB</span>
<span class="t" style="left:893.6px;top:444.0px;font-size:13px;line-height:17px;color:#000;letter-spacing:0.40px;">164.16 M...</span>
<span class="t" style="left:977.2px;top:444.0px;font-size:13px;line-height:17px;color:#000;letter-spacing:-0.17px;">WiFi</span>
<span class="t" style="left:1036.8px;top:444.0px;font-size:13px;line-height:17px;color:#000;letter-spacing:-0.60px;">ASUS</span>
<span class="t" style="left:1088.6px;top:444.0px;font-size:13px;line-height:17px;color:#000;letter-spacing:-0.10px;">2C:...</span>
<span class="t" style="left:1131.3px;top:444.0px;font-size:13px;line-height:17px;color:#000;letter-spacing:-1.07px;">...</span>
<span class="t" style="left:1154.3px;top:444.0px;font-size:13px;line-height:17px;color:#000;letter-spacing:-1.07px;">...</span>
<span class="t" style="left:1177.5px;top:444.0px;font-size:13px;line-height:17px;color:#000;letter-spacing:-1.07px;">...</span>
<span class="t" style="left:1223.4px;top:444.0px;font-size:13px;line-height:17px;color:#000;letter-spacing:-1.07px;">...</span>
<span class="t" style="left:1246.4px;top:444.0px;font-size:13px;line-height:17px;color:#000;letter-spacing:-1.07px;">...</span>
<span class="t" style="left:1200.6px;top:444.0px;font-size:13px;line-height:17px;color:#000;letter-spacing:0.53px;">56</span>
<span class="t" style="left:716.9px;top:463.0px;font-size:13px;line-height:17px;color:#000;letter-spacing:0.73px;">64.14-66.15...</span>
<span class="t" style="left:820.2px;top:463.0px;font-size:13px;line-height:17px;color:#000;letter-spacing:0.48px;">36.38 MB</span>
<span class="t" style="left:893.6px;top:463.0px;font-size:13px;line-height:17px;color:#000;letter-spacing:0.40px;">152.45 M...</span>
<span class="t" style="left:977.2px;top:463.0px;font-size:13px;line-height:17px;color:#000;letter-spacing:-0.17px;">WiFi</span>
<span class="t" style="left:1036.8px;top:463.0px;font-size:13px;line-height:17px;color:#000;letter-spacing:-0.60px;">ASUS</span>
<span class="t" style="left:1088.6px;top:463.0px;font-size:13px;line-height:17px;color:#000;letter-spacing:-0.10px;">2C:...</span>
<span class="t" style="left:1131.3px;top:463.0px;font-size:13px;line-height:17px;color:#000;letter-spacing:-1.07px;">...</span>
<span class="t" style="left:1154.3px;top:463.0px;font-size:13px;line-height:17px;color:#000;letter-spacing:-1.07px;">...</span>
<span class="t" style="left:1177.5px;top:463.0px;font-size:13px;line-height:17px;color:#000;letter-spacing:-1.07px;">...</span>
<span class="t" style="left:1223.4px;top:463.0px;font-size:13px;line-height:17px;color:#000;letter-spacing:-1.07px;">...</span>
<span class="t" style="left:1246.4px;top:463.0px;font-size:13px;line-height:17px;color:#000;letter-spacing:-1.07px;">...</span>
<span class="t" style="left:1200.6px;top:463.0px;font-size:13px;line-height:17px;color:#000;letter-spacing:0.53px;">55</span>
<span class="t" style="left:716.9px;top:482.0px;font-size:13px;line-height:17px;color:#000;letter-spacing:0.73px;">62.14-64.14...</span>
<span class="t" style="left:820.2px;top:482.0px;font-size:13px;line-height:17px;color:#000;letter-spacing:0.48px;">39.00 MB</span>
<span class="t" style="left:893.6px;top:482.0px;font-size:13px;line-height:17px;color:#000;letter-spacing:0.40px;">163.53 M...</span>
<span class="t" style="left:977.2px;top:482.0px;font-size:13px;line-height:17px;color:#000;letter-spacing:-0.17px;">WiFi</span>
<span class="t" style="left:1036.8px;top:482.0px;font-size:13px;line-height:17px;color:#000;letter-spacing:-0.60px;">ASUS</span>
<span class="t" style="left:1088.6px;top:482.0px;font-size:13px;line-height:17px;color:#000;letter-spacing:-0.10px;">2C:...</span>
<span class="t" style="left:1131.3px;top:482.0px;font-size:13px;line-height:17px;color:#000;letter-spacing:-1.07px;">...</span>
<span class="t" style="left:1154.3px;top:482.0px;font-size:13px;line-height:17px;color:#000;letter-spacing:-1.07px;">...</span>
<span class="t" style="left:1177.5px;top:482.0px;font-size:13px;line-height:17px;color:#000;letter-spacing:-1.07px;">...</span>
<span class="t" style="left:1223.4px;top:482.0px;font-size:13px;line-height:17px;color:#000;letter-spacing:-1.07px;">...</span>
<span class="t" style="left:1246.4px;top:482.0px;font-size:13px;line-height:17px;color:#000;letter-spacing:-1.07px;">...</span>
<span class="t" style="left:1200.6px;top:482.0px;font-size:13px;line-height:17px;color:#000;letter-spacing:0.53px;">54</span>
<span class="t" style="left:716.9px;top:501.0px;font-size:13px;line-height:17px;color:#000;letter-spacing:0.73px;">60.14-62.14...</span>
<span class="t" style="left:820.2px;top:501.0px;font-size:13px;line-height:17px;color:#000;letter-spacing:0.48px;">38.75 MB</span>
<span class="t" style="left:893.6px;top:501.0px;font-size:13px;line-height:17px;color:#000;letter-spacing:0.40px;">162.09 M...</span>
<span class="t" style="left:977.2px;top:501.0px;font-size:13px;line-height:17px;color:#000;letter-spacing:-0.17px;">WiFi</span>
<span class="t" style="left:1036.8px;top:501.0px;font-size:13px;line-height:17px;color:#000;letter-spacing:-0.60px;">ASUS</span>
<span class="t" style="left:1088.6px;top:501.0px;font-size:13px;line-height:17px;color:#000;letter-spacing:-0.10px;">2C:...</span>
<span class="t" style="left:1131.3px;top:501.0px;font-size:13px;line-height:17px;color:#000;letter-spacing:-1.07px;">...</span>
<span class="t" style="left:1154.3px;top:501.0px;font-size:13px;line-height:17px;color:#000;letter-spacing:-1.07px;">...</span>
<span class="t" style="left:1177.5px;top:501.0px;font-size:13px;line-height:17px;color:#000;letter-spacing:-1.07px;">...</span>
<span class="t" style="left:1223.4px;top:501.0px;font-size:13px;line-height:17px;color:#000;letter-spacing:-1.07px;">...</span>
<span class="t" style="left:1246.4px;top:501.0px;font-size:13px;line-height:17px;color:#000;letter-spacing:-1.07px;">...</span>
<span class="t" style="left:1200.6px;top:501.0px;font-size:13px;line-height:17px;color:#000;letter-spacing:0.53px;">54</span>
<span class="t" style="left:716.9px;top:520.0px;font-size:13px;line-height:17px;color:#000;letter-spacing:0.73px;">58.13-60.14...</span>
<span class="t" style="left:820.2px;top:520.0px;font-size:13px;line-height:17px;color:#000;letter-spacing:0.48px;">38.88 MB</span>
<span class="t" style="left:893.6px;top:520.0px;font-size:13px;line-height:17px;color:#000;letter-spacing:0.40px;">162.50 M...</span>
<span class="t" style="left:977.2px;top:520.0px;font-size:13px;line-height:17px;color:#000;letter-spacing:-0.17px;">WiFi</span>
<span class="t" style="left:1036.8px;top:520.0px;font-size:13px;line-height:17px;color:#000;letter-spacing:-0.60px;">ASUS</span>
<span class="t" style="left:1088.6px;top:520.0px;font-size:13px;line-height:17px;color:#000;letter-spacing:-0.10px;">2C:...</span>
<span class="t" style="left:1131.3px;top:520.0px;font-size:13px;line-height:17px;color:#000;letter-spacing:-1.07px;">...</span>
<span class="t" style="left:1154.3px;top:520.0px;font-size:13px;line-height:17px;color:#000;letter-spacing:-1.07px;">...</span>
<span class="t" style="left:1177.5px;top:520.0px;font-size:13px;line-height:17px;color:#000;letter-spacing:-1.07px;">...</span>
<span class="t" style="left:1223.4px;top:520.0px;font-size:13px;line-height:17px;color:#000;letter-spacing:-1.07px;">...</span>
<span class="t" style="left:1246.4px;top:520.0px;font-size:13px;line-height:17px;color:#000;letter-spacing:-1.07px;">...</span>
<span class="t" style="left:1200.6px;top:520.0px;font-size:13px;line-height:17px;color:#000;letter-spacing:0.53px;">55</span>
<span class="t" style="left:716.9px;top:539.0px;font-size:13px;line-height:17px;color:#000;letter-spacing:0.73px;">56.13-58.13...</span>
<span class="t" style="left:820.2px;top:539.0px;font-size:13px;line-height:17px;color:#000;letter-spacing:0.48px;">39.12 MB</span>
<span class="t" style="left:893.6px;top:539.0px;font-size:13px;line-height:17px;color:#000;letter-spacing:0.40px;">163.75 M...</span>
<span class="t" style="left:977.2px;top:539.0px;font-size:13px;line-height:17px;color:#000;letter-spacing:-0.17px;">WiFi</span>
<span class="t" style="left:1036.8px;top:539.0px;font-size:13px;line-height:17px;color:#000;letter-spacing:-0.60px;">ASUS</span>
<span class="t" style="left:1088.6px;top:539.0px;font-size:13px;line-height:17px;color:#000;letter-spacing:-0.10px;">2C:...</span>
<span class="t" style="left:1131.3px;top:539.0px;font-size:13px;line-height:17px;color:#000;letter-spacing:-1.07px;">...</span>
<span class="t" style="left:1154.3px;top:539.0px;font-size:13px;line-height:17px;color:#000;letter-spacing:-1.07px;">...</span>
<span class="t" style="left:1177.5px;top:539.0px;font-size:13px;line-height:17px;color:#000;letter-spacing:-1.07px;">...</span>
<span class="t" style="left:1223.4px;top:539.0px;font-size:13px;line-height:17px;color:#000;letter-spacing:-1.07px;">...</span>
<span class="t" style="left:1246.4px;top:539.0px;font-size:13px;line-height:17px;color:#000;letter-spacing:-1.07px;">...</span>
<span class="t" style="left:1200.6px;top:539.0px;font-size:13px;line-height:17px;color:#000;letter-spacing:0.53px;">55</span>
<span class="t" style="left:716.9px;top:558.0px;font-size:13px;line-height:17px;color:#000;letter-spacing:0.73px;">54.12-56.13...</span>
<span class="t" style="left:820.2px;top:558.0px;font-size:13px;line-height:17px;color:#000;letter-spacing:0.48px;">38.50 MB</span>
<span class="t" style="left:893.6px;top:558.0px;font-size:13px;line-height:17px;color:#000;letter-spacing:0.40px;">160.69 M...</span>
<span class="t" style="left:977.2px;top:558.0px;font-size:13px;line-height:17px;color:#000;letter-spacing:-0.17px;">WiFi</span>
<span class="t" style="left:1036.8px;top:558.0px;font-size:13px;line-height:17px;color:#000;letter-spacing:-0.60px;">ASUS</span>
<span class="t" style="left:1088.6px;top:558.0px;font-size:13px;line-height:17px;color:#000;letter-spacing:-0.10px;">2C:...</span>
<span class="t" style="left:1131.3px;top:558.0px;font-size:13px;line-height:17px;color:#000;letter-spacing:-1.07px;">...</span>
<span class="t" style="left:1154.3px;top:558.0px;font-size:13px;line-height:17px;color:#000;letter-spacing:-1.07px;">...</span>
<span class="t" style="left:1177.5px;top:558.0px;font-size:13px;line-height:17px;color:#000;letter-spacing:-1.07px;">...</span>
<span class="t" style="left:1223.4px;top:558.0px;font-size:13px;line-height:17px;color:#000;letter-spacing:-1.07px;">...</span>
<span class="t" style="left:1246.4px;top:558.0px;font-size:13px;line-height:17px;color:#000;letter-spacing:-1.07px;">...</span>
<span class="t" style="left:1200.6px;top:558.0px;font-size:13px;line-height:17px;color:#000;letter-spacing:0.53px;">56</span>
<span class="t" style="left:716.9px;top:577.0px;font-size:13px;line-height:17px;color:#000;letter-spacing:0.80px;">52.11-54.12...</span>
<span class="t" style="left:820.2px;top:577.0px;font-size:13px;line-height:17px;color:#000;letter-spacing:0.48px;">38.12 MB</span>
<span class="t" style="left:893.6px;top:577.0px;font-size:13px;line-height:17px;color:#000;letter-spacing:0.40px;">159.59 M...</span>
<span class="t" style="left:977.2px;top:577.0px;font-size:13px;line-height:17px;color:#000;letter-spacing:-0.17px;">WiFi</span>
<span class="t" style="left:1036.8px;top:577.0px;font-size:13px;line-height:17px;color:#000;letter-spacing:-0.60px;">ASUS</span>
<span class="t" style="left:1088.6px;top:577.0px;font-size:13px;line-height:17px;color:#000;letter-spacing:-0.10px;">2C:...</span>
<span class="t" style="left:1131.3px;top:577.0px;font-size:13px;line-height:17px;color:#000;letter-spacing:-1.07px;">...</span>
<span class="t" style="left:1154.3px;top:577.0px;font-size:13px;line-height:17px;color:#000;letter-spacing:-1.07px;">...</span>
<span class="t" style="left:1177.5px;top:577.0px;font-size:13px;line-height:17px;color:#000;letter-spacing:-1.07px;">...</span>
<span class="t" style="left:1223.4px;top:577.0px;font-size:13px;line-height:17px;color:#000;letter-spacing:-1.07px;">...</span>
<span class="t" style="left:1246.4px;top:577.0px;font-size:13px;line-height:17px;color:#000;letter-spacing:-1.07px;">...</span>
<span class="t" style="left:1200.6px;top:577.0px;font-size:13px;line-height:17px;color:#000;letter-spacing:0.53px;">56</span>
<span class="t" style="left:716.9px;top:596.0px;font-size:13px;line-height:17px;color:#000;letter-spacing:0.88px;">50.11-52.11...</span>
<span class="t" style="left:820.2px;top:596.0px;font-size:13px;line-height:17px;color:#000;letter-spacing:0.48px;">38.12 MB</span>
<span class="t" style="left:893.6px;top:596.0px;font-size:13px;line-height:17px;color:#000;letter-spacing:0.40px;">159.54 M...</span>
<span class="t" style="left:977.2px;top:596.0px;font-size:13px;line-height:17px;color:#000;letter-spacing:-0.17px;">WiFi</span>
<span class="t" style="left:1036.8px;top:596.0px;font-size:13px;line-height:17px;color:#000;letter-spacing:-0.60px;">ASUS</span>
<span class="t" style="left:1088.6px;top:596.0px;font-size:13px;line-height:17px;color:#000;letter-spacing:-0.10px;">2C:...</span>
<span class="t" style="left:1131.3px;top:596.0px;font-size:13px;line-height:17px;color:#000;letter-spacing:-1.07px;">...</span>
<span class="t" style="left:1154.3px;top:596.0px;font-size:13px;line-height:17px;color:#000;letter-spacing:-1.07px;">...</span>
<span class="t" style="left:1177.5px;top:596.0px;font-size:13px;line-height:17px;color:#000;letter-spacing:-1.07px;">...</span>
<span class="t" style="left:1223.4px;top:596.0px;font-size:13px;line-height:17px;color:#000;letter-spacing:-1.07px;">...</span>
<span class="t" style="left:1246.4px;top:596.0px;font-size:13px;line-height:17px;color:#000;letter-spacing:-1.07px;">...</span>
<span class="t" style="left:1200.6px;top:596.0px;font-size:13px;line-height:17px;color:#000;letter-spacing:0.53px;">56</span>
<span class="t" style="left:716.9px;top:615.0px;font-size:13px;line-height:17px;color:#000;letter-spacing:0.80px;">48.10-50.11...</span>
<span class="t" style="left:820.2px;top:615.0px;font-size:13px;line-height:17px;color:#000;letter-spacing:0.48px;">39.00 MB</span>
<span class="t" style="left:893.6px;top:615.0px;font-size:13px;line-height:17px;color:#000;letter-spacing:0.40px;">163.13 M...</span>
<span class="t" style="left:977.2px;top:615.0px;font-size:13px;line-height:17px;color:#000;letter-spacing:-0.17px;">WiFi</span>
<span class="t" style="left:1036.8px;top:615.0px;font-size:13px;line-height:17px;color:#000;letter-spacing:-0.60px;">ASUS</span>
<span class="t" style="left:1088.6px;top:615.0px;font-size:13px;line-height:17px;color:#000;letter-spacing:-0.10px;">2C:...</span>
<span class="t" style="left:1131.3px;top:615.0px;font-size:13px;line-height:17px;color:#000;letter-spacing:-1.07px;">...</span>
<span class="t" style="left:1154.3px;top:615.0px;font-size:13px;line-height:17px;color:#000;letter-spacing:-1.07px;">...</span>
<span class="t" style="left:1177.5px;top:615.0px;font-size:13px;line-height:17px;color:#000;letter-spacing:-1.07px;">...</span>
<span class="t" style="left:1223.4px;top:615.0px;font-size:13px;line-height:17px;color:#000;letter-spacing:-1.07px;">...</span>
<span class="t" style="left:1246.4px;top:615.0px;font-size:13px;line-height:17px;color:#000;letter-spacing:-1.07px;">...</span>
<span class="t" style="left:1200.6px;top:615.0px;font-size:13px;line-height:17px;color:#000;letter-spacing:0.53px;">57</span>
<span class="t" style="left:716.9px;top:634.0px;font-size:13px;line-height:17px;color:#000;letter-spacing:0.73px;">46.10-48.10...</span>
<span class="t" style="left:820.2px;top:634.0px;font-size:13px;line-height:17px;color:#000;letter-spacing:0.48px;">39.25 MB</span>
<span class="t" style="left:893.6px;top:634.0px;font-size:13px;line-height:17px;color:#000;letter-spacing:0.40px;">164.61 M...</span>
<span class="t" style="left:977.2px;top:634.0px;font-size:13px;line-height:17px;color:#000;letter-spacing:-0.17px;">WiFi</span>
<span class="t" style="left:1036.8px;top:634.0px;font-size:13px;line-height:17px;color:#000;letter-spacing:-0.60px;">ASUS</span>
<span class="t" style="left:1088.6px;top:634.0px;font-size:13px;line-height:17px;color:#000;letter-spacing:-0.10px;">2C:...</span>
<span class="t" style="left:1131.3px;top:634.0px;font-size:13px;line-height:17px;color:#000;letter-spacing:-1.07px;">...</span>
<span class="t" style="left:1154.3px;top:634.0px;font-size:13px;line-height:17px;color:#000;letter-spacing:-1.07px;">...</span>
<span class="t" style="left:1177.5px;top:634.0px;font-size:13px;line-height:17px;color:#000;letter-spacing:-1.07px;">...</span>
<span class="t" style="left:1223.4px;top:634.0px;font-size:13px;line-height:17px;color:#000;letter-spacing:-1.07px;">...</span>
<span class="t" style="left:1246.4px;top:634.0px;font-size:13px;line-height:17px;color:#000;letter-spacing:-1.07px;">...</span>
<span class="t" style="left:1200.6px;top:634.0px;font-size:13px;line-height:17px;color:#000;letter-spacing:0.53px;">56</span>
<span class="t" style="left:716.9px;top:653.0px;font-size:13px;line-height:17px;color:#000;letter-spacing:0.73px;">44.10-46.10...</span>
<span class="t" style="left:820.2px;top:653.0px;font-size:13px;line-height:17px;color:#000;letter-spacing:0.48px;">38.75 MB</span>
<span class="t" style="left:893.6px;top:653.0px;font-size:13px;line-height:17px;color:#000;letter-spacing:0.40px;">161.97 M...</span>
<span class="t" style="left:977.2px;top:653.0px;font-size:13px;line-height:17px;color:#000;letter-spacing:-0.17px;">WiFi</span>
<span class="t" style="left:1036.8px;top:653.0px;font-size:13px;line-height:17px;color:#000;letter-spacing:-0.60px;">ASUS</span>
<span class="t" style="left:1088.6px;top:653.0px;font-size:13px;line-height:17px;color:#000;letter-spacing:-0.10px;">2C:...</span>
<span class="t" style="left:1131.3px;top:653.0px;font-size:13px;line-height:17px;color:#000;letter-spacing:-1.07px;">...</span>
<span class="t" style="left:1154.3px;top:653.0px;font-size:13px;line-height:17px;color:#000;letter-spacing:-1.07px;">...</span>
<span class="t" style="left:1177.5px;top:653.0px;font-size:13px;line-height:17px;color:#000;letter-spacing:-1.07px;">...</span>
<span class="t" style="left:1223.4px;top:653.0px;font-size:13px;line-height:17px;color:#000;letter-spacing:-1.07px;">...</span>
<span class="t" style="left:1246.4px;top:653.0px;font-size:13px;line-height:17px;color:#000;letter-spacing:-1.07px;">...</span>
<span class="t" style="left:1200.6px;top:653.0px;font-size:13px;line-height:17px;color:#000;letter-spacing:0.53px;">57</span>
<span class="t" style="left:716.9px;top:672.0px;font-size:13px;line-height:17px;color:#000;letter-spacing:0.73px;">42.09-44.10...</span>
<span class="t" style="left:820.2px;top:672.0px;font-size:13px;line-height:17px;color:#000;letter-spacing:0.48px;">34.00 MB</span>
<span class="t" style="left:893.6px;top:672.0px;font-size:13px;line-height:17px;color:#000;letter-spacing:0.40px;">142.18 M...</span>
<span class="t" style="left:977.2px;top:672.0px;font-size:13px;line-height:17px;color:#000;letter-spacing:-0.17px;">WiFi</span>
<span class="t" style="left:1036.8px;top:672.0px;font-size:13px;line-height:17px;color:#000;letter-spacing:-0.60px;">ASUS</span>
<span class="t" style="left:1088.6px;top:672.0px;font-size:13px;line-height:17px;color:#000;letter-spacing:-0.10px;">2C:...</span>
<span class="t" style="left:1131.3px;top:672.0px;font-size:13px;line-height:17px;color:#000;letter-spacing:-1.07px;">...</span>
<span class="t" style="left:1154.3px;top:672.0px;font-size:13px;line-height:17px;color:#000;letter-spacing:-1.07px;">...</span>
<span class="t" style="left:1177.5px;top:672.0px;font-size:13px;line-height:17px;color:#000;letter-spacing:-1.07px;">...</span>
<span class="t" style="left:1223.4px;top:672.0px;font-size:13px;line-height:17px;color:#000;letter-spacing:-1.07px;">...</span>
<span class="t" style="left:1246.4px;top:672.0px;font-size:13px;line-height:17px;color:#000;letter-spacing:-1.07px;">...</span>
<span class="t" style="left:1200.6px;top:672.0px;font-size:13px;line-height:17px;color:#000;letter-spacing:0.53px;">57</span>
<span class="t" style="left:716.9px;top:691.0px;font-size:13px;line-height:17px;color:#000;letter-spacing:0.73px;">40.07-42.09...</span>
<span class="t" style="left:820.2px;top:691.0px;font-size:13px;line-height:17px;color:#000;letter-spacing:0.48px;">32.88 MB</span>
<span class="t" style="left:893.6px;top:691.0px;font-size:13px;line-height:17px;color:#000;letter-spacing:0.40px;">136.85 M...</span>
<span class="t" style="left:977.2px;top:691.0px;font-size:13px;line-height:17px;color:#000;letter-spacing:-0.17px;">WiFi</span>
<span class="t" style="left:1036.8px;top:691.0px;font-size:13px;line-height:17px;color:#000;letter-spacing:-0.60px;">ASUS</span>
<span class="t" style="left:1088.6px;top:691.0px;font-size:13px;line-height:17px;color:#000;letter-spacing:-0.10px;">2C:...</span>
<span class="t" style="left:1131.3px;top:691.0px;font-size:13px;line-height:17px;color:#000;letter-spacing:-1.07px;">...</span>
<span class="t" style="left:1154.3px;top:691.0px;font-size:13px;line-height:17px;color:#000;letter-spacing:-1.07px;">...</span>
<span class="t" style="left:1177.5px;top:691.0px;font-size:13px;line-height:17px;color:#000;letter-spacing:-1.07px;">...</span>
<span class="t" style="left:1223.4px;top:691.0px;font-size:13px;line-height:17px;color:#000;letter-spacing:-1.07px;">...</span>
<span class="t" style="left:1246.4px;top:691.0px;font-size:13px;line-height:17px;color:#000;letter-spacing:-1.07px;">...</span>
<span class="t" style="left:1200.6px;top:691.0px;font-size:13px;line-height:17px;color:#000;letter-spacing:0.53px;">57</span>
<span class="t" style="left:716.9px;top:710.0px;font-size:13px;line-height:17px;color:#000;letter-spacing:0.73px;">38.07-40.07...</span>
<span class="t" style="left:820.2px;top:710.0px;font-size:13px;line-height:17px;color:#000;letter-spacing:0.48px;">38.88 MB</span>
<span class="t" style="left:893.6px;top:710.0px;font-size:13px;line-height:17px;color:#000;letter-spacing:0.40px;">162.83 M...</span>
<span class="t" style="left:977.2px;top:710.0px;font-size:13px;line-height:17px;color:#000;letter-spacing:-0.17px;">WiFi</span>
<span class="t" style="left:1036.8px;top:710.0px;font-size:13px;line-height:17px;color:#000;letter-spacing:-0.60px;">ASUS</span>
<span class="t" style="left:1088.6px;top:710.0px;font-size:13px;line-height:17px;color:#000;letter-spacing:-0.10px;">2C:...</span>
<span class="t" style="left:1131.3px;top:710.0px;font-size:13px;line-height:17px;color:#000;letter-spacing:-1.07px;">...</span>
<span class="t" style="left:1154.3px;top:710.0px;font-size:13px;line-height:17px;color:#000;letter-spacing:-1.07px;">...</span>
<span class="t" style="left:1177.5px;top:710.0px;font-size:13px;line-height:17px;color:#000;letter-spacing:-1.07px;">...</span>
<span class="t" style="left:1223.4px;top:710.0px;font-size:13px;line-height:17px;color:#000;letter-spacing:-1.07px;">...</span>
<span class="t" style="left:1246.4px;top:710.0px;font-size:13px;line-height:17px;color:#000;letter-spacing:-1.07px;">...</span>
<span class="t" style="left:1200.6px;top:710.0px;font-size:13px;line-height:17px;color:#000;letter-spacing:0.53px;">56</span>
 </div>
</div>

<svg class="abs" style="left:0;top:0" width="1280" height="800" viewBox="0 0 1280 800" font-family="'Liberation Sans', sans-serif">
<defs>
<linearGradient id="dkbg" x1="191" x2="1089" y1="0" y2="0" gradientUnits="userSpaceOnUse">
<stop offset="0" stop-color="#3a2a6b"/><stop offset="0.50" stop-color="#3a2a72"/><stop offset="0.585" stop-color="#3f2a96"/><stop offset="0.66" stop-color="#3e2a94"/>
<stop offset="0.72" stop-color="#2c3d44"/><stop offset="0.78" stop-color="#2c4039"/><stop offset="0.845" stop-color="#2d3f3e"/><stop offset="0.895" stop-color="#37345c"/><stop offset="1" stop-color="#3a2a6b"/></linearGradient>
<linearGradient id="fnL" x1="0" y1="0" x2="0" y2="1"><stop offset="0" stop-color="#2ac4f8"/><stop offset="1" stop-color="#1a6cdf"/></linearGradient>
<linearGradient id="fnR" x1="0" y1="0" x2="0" y2="1"><stop offset="0" stop-color="#fbfcfd"/><stop offset="1" stop-color="#dfe8f2"/></linearGradient>
<linearGradient id="lpO" x1="0" y1="0" x2="0" y2="1"><stop offset="0" stop-color="#fbfdfc"/><stop offset="1" stop-color="#b2b2ac"/></linearGradient>
<linearGradient id="lpI" x1="0" y1="0" x2="0" y2="1"><stop offset="0" stop-color="#d6e1e4"/><stop offset="1" stop-color="#8e8e8e"/></linearGradient>
<linearGradient id="omn" x1="0" y1="0" x2="0" y2="1"><stop offset="0" stop-color="#bd7cec"/><stop offset="1" stop-color="#aa52ea"/></linearGradient>
<pattern id="hatch" width="2.4" height="2.4" patternUnits="userSpaceOnUse" patternTransform="rotate(-45)"><rect width="2.4" height="1" fill="#fff" fill-opacity="0.13"/></pattern>
<linearGradient id="scrL" x1="0" y1="0" x2="0" y2="1"><stop offset="0" stop-color="#3a3a3a"/><stop offset="0.4" stop-color="#0c0c0c"/><stop offset="1" stop-color="#2a2a2a"/></linearGradient>
<linearGradient id="scrS" x1="0" y1="0" x2="1" y2="0"><stop offset="0" stop-color="#8c8f92"/><stop offset="0.5" stop-color="#e6e8ea"/><stop offset="1" stop-color="#9a9c9e"/></linearGradient>
<linearGradient id="ntY" x1="0" y1="0" x2="0" y2="1"><stop offset="0" stop-color="#fddb50"/><stop offset="1" stop-color="#f6bd22"/></linearGradient>
<linearGradient id="msB" x1="0" y1="0" x2="0" y2="1"><stop offset="0" stop-color="#5fcafb"/><stop offset="1" stop-color="#1987ee"/></linearGradient>
<linearGradient id="msW" x1="0" y1="0" x2="0" y2="1"><stop offset="0" stop-color="#ffffff"/><stop offset="1" stop-color="#d5e2f0"/></linearGradient>
<linearGradient id="sfB" x1="0" y1="0" x2="0" y2="1"><stop offset="0" stop-color="#2cc3f6"/><stop offset="1" stop-color="#1a67de"/></linearGradient>
<linearGradient id="mlS" x1="0" y1="0" x2="0" y2="1"><stop offset="0" stop-color="#3f8bd8"/><stop offset="0.6" stop-color="#8fbfe8"/><stop offset="1" stop-color="#cfe2f2"/></linearGradient>
<linearGradient id="ctB" x1="0" y1="0" x2="1" y2="0"><stop offset="0" stop-color="#be9254"/><stop offset="0.12" stop-color="#cba263"/><stop offset="1" stop-color="#c1965a"/></linearGradient>
<linearGradient id="itR" x1="0.1" y1="0" x2="0.9" y2="1"><stop offset="0" stop-color="#fb5c74"/><stop offset="0.5" stop-color="#c24fe0"/><stop offset="1" stop-color="#38b6f7"/></linearGradient>
<linearGradient id="itN" x1="0" y1="0" x2="0" y2="1"><stop offset="0" stop-color="#f8506a"/><stop offset="0.55" stop-color="#d655b8"/><stop offset="1" stop-color="#5a8cf8"/></linearGradient>
<linearGradient id="nbR" x1="0" y1="0" x2="0" y2="1"><stop offset="0" stop-color="#f7707c"/><stop offset="1" stop-color="#e82c4c"/></linearGradient>
<linearGradient id="nbO" x1="0" y1="0" x2="0" y2="1"><stop offset="0" stop-color="#fbbf4a"/><stop offset="1" stop-color="#f2841c"/></linearGradient>
<linearGradient id="nbG" x1="0" y1="0" x2="0" y2="1"><stop offset="0" stop-color="#5fe07c"/><stop offset="1" stop-color="#22b04a"/></linearGradient>
<linearGradient id="nbB" x1="0" y1="0" x2="0" y2="1"><stop offset="0" stop-color="#62c4fa"/><stop offset="1" stop-color="#1e86ea"/></linearGradient>
<linearGradient id="afA" x1="0" y1="0" x2="1" y2="1"><stop offset="0" stop-color="#d15cf0"/><stop offset="1" stop-color="#7a26b8"/></linearGradient>
<linearGradient id="afB" x1="0" y1="0" x2="0.3" y2="1"><stop offset="0" stop-color="#f7a8f4"/><stop offset="1" stop-color="#d45ae6"/></linearGradient>
<linearGradient id="trG" x1="0" y1="0" x2="1" y2="0"><stop offset="0" stop-color="#c4c4ca"/><stop offset="0.3" stop-color="#ebebee"/><stop offset="0.7" stop-color="#e0e0e4"/><stop offset="1" stop-color="#b4b4bc"/></linearGradient>
</defs>
<path d="M191 800V751a5 5 0 0 1 5-5H1084a5 5 0 0 1 5 5V800Z" fill="url(#dkbg)"/>
<path d="M191.5 800V751a4.5 4.5 0 0 1 4.5-4.5H1084a4.5 4.5 0 0 1 4.5 4.5V800" fill="none" stroke="#fff" stroke-opacity="0.08"/>
<circle cx="216" cy="796" r="1.9" fill="#c9aef2"/>
<circle cx="400" cy="796" r="1.9" fill="#c9aef2"/>
<circle cx="538" cy="796" r="1.9" fill="#c9aef2"/>
<circle cx="584" cy="796" r="1.9" fill="#c9aef2"/>
<circle cx="814" cy="796" r="1.9" fill="#c9aef2"/>
<circle cx="951.9" cy="796" r="1.9" fill="#c9aef2"/>
<g><rect x="198" y="753.8" width="36.3" height="34" rx="2.2" fill="url(#fnR)"/><path d="M200.2 753.8H217.2C215 759 213.4 766 213 772.6H217.6C217.6 778 218.4 783.5 219.6 787.8H200.2a2.2 2.2 0 0 1-2.2-2.2V756a2.2 2.2 0 0 1 2.2-2.2Z" fill="url(#fnL)"/><path d="M217.2 753.8C215 759 213.4 766 213 772.6H217.6C217.6 778 218.4 783.5 219.6 787.8" fill="none" stroke="#1a3c6a" stroke-opacity="0.55" stroke-width="0.7"/><rect x="207.3" y="762.4" width="1.5" height="3.7" rx="0.7" fill="#15202e"/><rect x="223.4" y="762.4" width="1.5" height="3.7" rx="0.7" fill="#15202e"/><path d="M204.8 775.6Q216 784.6 227.2 775.6" fill="none" stroke="#15202e" stroke-width="1.3" stroke-linecap="round"/></g>
<g><circle cx="261.9" cy="770.8" r="19.2" fill="url(#lpO)"/><circle cx="261.9" cy="770.8" r="17.6" fill="url(#lpI)"/><g transform="translate(262.4 770.4) rotate(45)" fill="#474a4c"><path d="M0 -15C3.6 -11 4.6 -5 4.2 3L8.8 8.6V12L3.4 9.2H-3.4L-8.8 12V8.6L-4.2 3C-4.6 -5 -3.6 -11 0 -15Z"/><path d="M-2.2 10.6H2.2L0 16.4Z"/><circle cx="0" cy="-5.4" r="2.2" fill="#b9c3c6"/></g></g>
<g transform="translate(308 770.9) rotate(-8.7)"><rect x="-16.3" y="-18" width="32.6" height="36" rx="3.6" fill="url(#omn)"/><rect x="-16.3" y="-18" width="32.6" height="36" rx="3.6" fill="url(#hatch)"/><path d="M-11 1.2L-4.6 9.4L9.6 -9.2" fill="none" stroke="#444648" stroke-width="5" stroke-linejoin="miter"/></g>
<g><rect x="335" y="751.8" width="38.2" height="38.2" rx="3.2" fill="url(#scrL)"/><path d="M352 751.8H370a3.2 3.2 0 0 1 3.2 3.2V786.8a3.2 3.2 0 0 1-3.2 3.200H350C362 789 366 778 356 771C346 764 344 755 352 751.8Z" fill="#f6f6f6"/><text x="354" y="789.700" font-family="'Liberation Serif', serif" font-weight="700" font-size="58px" text-anchor="middle" fill="url(#scrS)" stroke="#f6f6f6" stroke-width="0.800" textLength="30" lengthAdjust="spacingAndGlyphs">S</text><path d="M352.300 757.300a1.900 1.900 0 1 1 1.800 2.600c-.3 1.700-1.200 2.700-2.600 3.300c1-1.300 1.300-2.500 1-3.600a1.900 1.900 0 0 1-.2-2.300Z" fill="#101010"/><path d="M355.200 783.200a2.100 2.100 0 1 1-1.800-3.100c.3-1.700 1.200-2.700 2.600-3.300c-1 1.300-1.300 2.500-1 3.600a2.100 2.100 0 0 1 .2 2.800Z" fill="#f6f6f6"/></g>
<g transform="translate(400.3 770.3) rotate(-9.5)"><rect x="-14.9" y="-18" width="29.8" height="36" rx="1" fill="#fbfbf6"/><rect x="-14.9" y="-18" width="29.8" height="7" rx="1" fill="url(#ntY)"/><path d="M-14.9 -7.2h29.8M-14.9 -3.9h29.8M-14.9 -0.6h29.8M-14.9 2.7h29.8M-14.9 6h29.8M-14.9 9.3h29.8M-14.9 12.6h29.8M-14.9 15.9h29.8" stroke="#dcdcd4" stroke-width="0.7"/><path d="M-14.9 17.6h29.8" stroke="#c9a85a" stroke-width="0.9"/></g>
<g><path d="M445.4 752.7c10.3 0 18.6 7.1 18.6 15.9s-8.3 15.9-18.6 15.9c-2.4 0-4.700-.4-6.800-1.100c-1.300 1.900-3.300 3.500-6 4.300c1.400-1.700 2.100-3.700 2.200-5.800c-4.900-2.900-8-7.800-8-13.300c0-8.800 8.300-15.900 18.600-15.900Z" fill="url(#msB)"/><path d="M452.5 769.200c6.400 0 11.500 4.200 11.500 9.300c0 3-1.700 5.600-4.400 7.300c.2 1.300 .8 2.500 1.800 3.600c-2.100-.3-3.800-1.300-5-2.500c-1.200 .4-2.500 .6-3.900 .6c-6.400 0-11.500-4.200-11.500-9.300s5.100-9 11.500-9Z" fill="url(#msW)"/><circle cx="447" cy="778.7" r="1.65" fill="#1463c4"/><circle cx="452.8" cy="778.7" r="1.65" fill="#1463c4"/><circle cx="458.6" cy="778.7" r="1.65" fill="#1463c4"/><circle cx="460.2" cy="757.7" r="8.2" fill="#f0383c"/><text x="460.2" y="761.4" font-size="10.5px" font-weight="700" fill="#fff" text-anchor="middle">3</text></g>
<g transform="translate(491.3 770.2) rotate(-9)"><rect x="-15.200" y="-14.2" width="31.400" height="34" rx="2" fill="#6f7b78"/><rect x="-14.6" y="-15.6" width="29.2" height="31" rx="1.6" fill="#fdfdfd"/><path d="M-14.6 -7.200V-14a1.600 1.600 0 0 1 1.600-1.600H13a1.600 1.600 0 0 1 1.600 1.600V-7.200Z" fill="#ee4f4b"/><text x="0" y="-8.800" font-size="6.500px" font-weight="700" fill="#fff" text-anchor="middle">FEB</text><text x="-0.300" y="10.800" font-size="20.500px" fill="#232323" text-anchor="middle" letter-spacing="-1.2">18</text></g>
<g><circle cx="538.1" cy="770.8" r="19.5" fill="#f7f8f8"/><circle cx="538.1" cy="770.8" r="17.700" fill="url(#sfB)"/><path d="M552.30 770.80L554.70 770.80M553.07 773.44L554.45 773.68M551.44 775.66L553.70 776.48M551.26 778.40L552.48 779.10M548.98 779.93L550.82 781.47M547.87 782.44L548.77 783.52M545.20 783.10L546.40 785.18M543.30 785.08L543.78 786.40M540.57 784.78L540.98 787.15M538.10 786.00L538.10 787.40M535.63 784.78L535.22 787.15M532.90 785.08L532.42 786.40M531.00 783.10L529.80 785.18M528.33 782.44L527.43 783.52M527.22 779.93L525.38 781.47M524.94 778.40L523.72 779.10M524.76 775.66L522.50 776.48M523.13 773.44L521.75 773.68M523.90 770.80L521.50 770.80M523.13 768.16L521.75 767.92M524.76 765.94L522.50 765.12M524.94 763.20L523.72 762.50M527.22 761.67L525.38 760.13M528.33 759.16L527.43 758.08M531.00 758.50L529.80 756.42M532.90 756.52L532.42 755.20M535.63 756.82L535.22 754.45M538.10 755.60L538.10 754.20M540.57 756.82L540.98 754.45M543.30 756.52L543.78 755.20M545.20 758.50L546.40 756.42M547.87 759.16L548.77 758.08M548.98 761.67L550.82 760.13M551.26 763.20L552.48 762.50M551.44 765.94L553.70 765.12M553.07 768.16L554.45 767.92" stroke="#fff" stroke-opacity="0.55" stroke-width="0.7"/><path d="M549.8 759.300L536.5 769.200L539.700 772.400Z" fill="#f5363c"/><path d="M549.8 759.300L538.1 770.8L539.700 772.400Z" fill="#c8242c"/><path d="M526.6 782.500L536.5 769.200L539.700 772.400Z" fill="#f4f4f4"/><path d="M526.6 782.500L538.1 770.8L539.700 772.400Z" fill="#c9ccd0"/></g>
<g transform="translate(583.6 770.9) rotate(-8.5)"><rect x="-14.6" y="-18.2" width="29.2" height="36.4" fill="#fbfbfb" stroke="#fbfbfb" stroke-width="1.600" stroke-dasharray="1.500 1.100"/><rect x="-12.2" y="-15.800" width="24.4" height="31.600" fill="url(#mlS)"/><ellipse cx="-5" cy="-7.500" rx="2.700" ry="6.600" transform="rotate(-22 -5 -7.500)" fill="#d9cdb4"/><ellipse cx="-5.600" cy="-8.500" rx="1.500" ry="5" transform="rotate(-22 -5.600 -8.500)" fill="#7c5e34"/><ellipse cx="5.300" cy="1.800" rx="6.800" ry="2.500" transform="rotate(27 5.300 1.800)" fill="#cdbf9f"/><ellipse cx="6.300" cy="3" rx="5.300" ry="1.300" transform="rotate(27 6.300 3)" fill="#7c5e34"/><ellipse cx="-0.300" cy="-1.500" rx="2.300" ry="5.200" transform="rotate(-38 -0.300 -1.500)" fill="#a78452"/><circle cx="2.100" cy="-4.700" r="1.700" fill="#efe9dc"/><path d="M-2.500 1.500L-6.500 5.500L-3 7.200L-0.800 3.500Z" fill="#b08c58"/><circle cx="7.200" cy="10" r="4.600" fill="none" stroke="#55657a" stroke-opacity="0.55" stroke-width="0.700"/><circle cx="7.200" cy="10.300" r="1.900" fill="#44546a" fill-opacity="0.7"/></g><rect x="585.8" y="749.5" width="22" height="16.4" rx="8.2" fill="#f0383c"/><text x="596.8" y="761.400" font-size="10px" font-weight="700" fill="#fff" text-anchor="middle" letter-spacing="-0.2">657</text>
<g transform="translate(629.3 770.7) rotate(-8.8)"><rect x="11" y="-15.500" width="5.600" height="7.500" rx="1" fill="#e4e4e2"/><rect x="11" y="-8" width="5.600" height="7" fill="#48b2ec"/><rect x="11" y="-1" width="5.600" height="7" fill="#56c456"/><rect x="11" y="6" width="5.600" height="7" rx="1" fill="#f2b21e"/><rect x="-13.800" y="-18.300" width="27.400" height="36.600" rx="2" fill="url(#ctB)"/><path d="M-13.800 16.300a2 2 0 0 0 2 2H11.600a2 2 0 0 0 2-2v-1.500H-13.800Z" fill="#a77f42"/><circle cx="0.500" cy="-2" r="8.800" fill="#b98e50" stroke="#b08446" stroke-width="0.800"/><path d="M0.500 -8a3.100 3.400 0 0 1 0 6.800a3.100 3.400 0 0 1 0-6.800ZM-5.500 4.300c0-3.300 2.500-4.800 6-4.800s6 1.500 6 4.800c-1.600 1.600-3.600 2.400-6 2.400s-4.400-.8-6-2.400Z" fill="#a67c40"/></g>
<g transform="translate(674.6 771) rotate(-8.300)"><rect x="-16.200" y="-16" width="32.400" height="32" fill="#fafafa"/><rect x="-14.300" y="-14.200" width="28.600" height="28.400" fill="#e9e2d2"/><rect x="-14.300" y="-13" width="19" height="3.600" fill="#79c24e"/><rect x="8" y="-13.500" width="5.500" height="4.200" fill="#f0a2b4"/><path d="M-14.300 -6.500H8.500V6" fill="none" stroke="#48aef2" stroke-width="2.600"/><path d="M-14.300 3.500C-8 1 -3 2 3 7L8 13" fill="none" stroke="#f6d042" stroke-width="3"/><path d="M-9.500 -2.500h9v4.200c0 2.500-2 4.300-4.500 5.300c-2.500-1-4.500-2.800-4.500-5.300Z" fill="#3a7ee0"/><path d="M-9.500 -2.500h9v1.800h-9Z" fill="#e04848"/></g><circle cx="686.7" cy="778.5" r="9.700" fill="#fbfbfb"/><circle cx="686.7" cy="778.5" r="5.700" fill="none" stroke="#6c9cb4" stroke-width="1"/><circle cx="686.7" cy="770.6" r="1.200" fill="#f03030"/><text x="686.7" y="781.2" font-size="6.500px" fill="#444" text-anchor="middle" font-weight="700">3D</text>
<g><circle cx="722" cy="770.8" r="19.600" fill="#fbfbfb"/><g style="mix-blend-mode:multiply"><ellipse cx="722" cy="761.900" rx="5.100" ry="7.700" fill="#f7941e" fill-opacity="0.86" transform="rotate(0 722 770.8)"/><ellipse cx="722" cy="761.900" rx="5.100" ry="7.700" fill="#f2d21e" fill-opacity="0.86" transform="rotate(45 722 770.8)"/><ellipse cx="722" cy="761.900" rx="5.100" ry="7.700" fill="#96ca30" fill-opacity="0.86" transform="rotate(90 722 770.8)"/><ellipse cx="722" cy="761.900" rx="5.100" ry="7.700" fill="#44b45c" fill-opacity="0.86" transform="rotate(135 722 770.8)"/><ellipse cx="722" cy="761.900" rx="5.100" ry="7.700" fill="#4ea0e4" fill-opacity="0.86" transform="rotate(180 722 770.8)"/><ellipse cx="722" cy="761.900" rx="5.100" ry="7.700" fill="#8c6cd2" fill-opacity="0.86" transform="rotate(225 722 770.8)"/><ellipse cx="722" cy="761.900" rx="5.100" ry="7.700" fill="#e06ca4" fill-opacity="0.86" transform="rotate(270 722 770.8)"/><ellipse cx="722" cy="761.900" rx="5.100" ry="7.700" fill="#f0402e" fill-opacity="0.86" transform="rotate(315 722 770.8)"/></g></g>
<g transform="translate(767.8 770.7) rotate(-10.500)"><rect x="-14.800" y="-17.600" width="29.600" height="35.200" fill="#fbfbfb"/><rect x="-14.800" y="-17.600" width="29.600" height="5.600" fill="#f59a22"/><text x="-12.600" y="-13" font-size="4.200px" font-weight="700" fill="#fff">PAGES</text><rect x="-11.800" y="-9.300" width="13.600" height="9.600" fill="#2c98e8"/><path d="M-8.500 -7.500L-5 -1.500L-1.500 -7.500L-5 -5.500Z" fill="#f5962a"/><path d="M4 -8.500h8M4 -6.500h8M4 -4.500h8M4 -2.500h8M4 -0.500h8M-11.800 3h24M-11.800 5h24M-11.800 7h24M-11.800 9h10M-11.800 11h10M-11.800 13h10M2 11h10M2 13h10" stroke="#c4c4c4" stroke-width="0.900"/></g><path d="M783.6 751.300L774.900 777.400" stroke="#f5a21e" stroke-width="3.600" stroke-linecap="round"/><path d="M784.300 751.800L775.800 777.600" stroke="#fbd27a" stroke-width="0.900"/><path d="M774.900 777.400L772.200 786.500" stroke="#2e2e30" stroke-width="3.200"/><path d="M772.700 785.500L771.100 790.500L770.700 786" fill="#cfd4d8" stroke="#cfd4d8" stroke-width="0.8"/>
<g><circle cx="814.1" cy="770.9" r="19.500" fill="url(#itR)"/><circle cx="814.1" cy="770.9" r="17.800" fill="#fbfbfd"/><path d="M808.300 761.300L823.900 758.200V775.800a3.900 3.200 -18 1 1-2.300-3V763.400L810.600 765.500V778.200a3.900 3.200 -18 1 1-2.300-3Z" fill="url(#itN)"/></g>
<g><path d="M843.200 773.300H876.800L879 786.500H841.100Z" fill="#f2f2f2"/><path d="M841.100 786.500H879V788.900H841.100Z" fill="#fdfdfd"/><path d="M843 776.500h2M842.800 779h2M842.500 781.500h2M842.300 784h2" stroke="#9a9a9a" stroke-width="0.700"/><rect x="846.600" y="771" width="6.600" height="13.700" rx="0.800" fill="url(#nbR)"/><rect x="854.300" y="763.700" width="6.700" height="21" rx="0.800" fill="url(#nbO)"/><rect x="862" y="753.100" width="6.600" height="31.600" rx="0.800" fill="url(#nbG)"/><rect x="869.600" y="759.200" width="6.900" height="25.500" rx="0.800" fill="url(#nbB)"/></g>
<g><path d="M899.500 751.500L908.500 751.900L926.900 781.500L925.300 786.600L890 787.400L884.700 780.400Z" fill="#6a22b8"/><path d="M888.200 785L926.900 781.500L925.300 786.600L890 787.400Z" fill="#4a1280"/><path d="M908.500 752.600L888.600 784.800L926.300 781.400Z" fill="url(#afB)" stroke="#8a2ccc" stroke-width="1.600" stroke-linejoin="round"/><path d="M908.500 752.600L914.300 766.500L903 784M888.600 784.800L901.500 771.500L926.300 781.400M897.500 770.500L906 769.500M914.300 766.500L907 777.500L921 777.200M901.500 771.500L896.500 784.200" fill="none" stroke="#8226c4" stroke-width="1.300"/><circle cx="904.600" cy="774.500" r="2.900" fill="#4a1272"/><path d="M908 787L910 790.500" stroke="#4a1280" stroke-width="1.200"/></g>
<g><circle cx="951.9" cy="770.8" r="21.900" fill="#8cc4dc"/><circle cx="951.9" cy="770.8" r="20.700" fill="#0e1a2a"/><circle cx="951.9" cy="770.8" r="19" fill="#2aacf5"/><path d="M947 764H943.200V768.500M956.800 764H960.600V768.500" fill="none" stroke="#16263c" stroke-width="1"/><circle cx="951.9" cy="762.900" r="5.100" fill="#16263c"/><path d="M948.300 765a3.900 3.900 0 0 0 7.200 0Z" fill="#d8eefa"/><path d="M948.600 763.800a3.500 3.500 0 1 1 6.600 0" fill="none" stroke="#6aa8cc" stroke-width="0.800" stroke-dasharray="0.700 0.700"/><path d="M951.9 763.600L954 760.800" stroke="#dff2fc" stroke-width="0.900" stroke-linecap="round"/><rect x="939.400" y="768.300" width="7.400" height="14" rx="1.100" fill="#16263c"/><rect x="940.300" y="769.300" width="5.600" height="10.300" fill="#b4dcf8"/><rect x="942.300" y="780.500" width="1.600" height="1" fill="#d8eefa"/><rect x="957" y="768.300" width="7.400" height="14" rx="1.100" fill="#16263c"/><rect x="957.900" y="769.300" width="5.600" height="10.300" fill="#b4dcf8"/><rect x="959.900" y="780.500" width="1.600" height="1" fill="#d8eefa"/></g>
<path d="M985.400 752V792.500" stroke="#fff" stroke-opacity="0.28" stroke-width="1"/>
<g><rect x="1003.500" y="750" width="29.200" height="4.600" fill="#e6e2e2"/><rect x="1003.500" y="750" width="4" height="4.300" fill="#55554f"/><rect x="1028.700" y="750" width="4" height="4.300" fill="#55554f"/><path d="M1009 752.300h18" stroke="#e04a52" stroke-width="1.600" stroke-dasharray="2.200 0.600"/><rect x="999.400" y="754.300" width="37.400" height="36.900" fill="#fafafa"/><rect x="999.400" y="754.300" width="37.400" height="36.900" fill="none" stroke="#dedede" stroke-width="0.800"/><path d="M1003.500 758.500h5M1003.500 760h4M1003.500 761.500h5.500" stroke="#e0525a" stroke-width="0.800"/><path d="M1015 759c2.500-1.800 6.500-1.500 9 1c2 2 2.800 5 2.600 8c-.2 3.500 .6 6.500 .2 9.800c-.3 2.800-1.500 5-1.200 7.700l.6 2h-4.200l-1.300-5.200c-1.600 1.800-4 3.300-6.700 4.200c-2.300 .8-4.700 .6-6.500-.4c2.500-1 4.600-2.500 6-4.500c1.500-2.200 3.600-3.600 4.700-6c.8-1.800-.6-3.600-1.600-5.500c-1.200-2.300-2.400-4.500-2.200-7c.1-1.600 .1-3 .6-4.100Z" fill="#d5161e"/><path d="M1013.500 762c-1.800 3-2.800 6.500-2.500 10M1012.500 768c-2.200 3-3.500 6.500-3.800 10M1016 775c-3 2.500-6 4-9.500 4.500M1025 764c1.500 3 2 6 1.500 9" fill="none" stroke="#d8303a" stroke-width="0.700" stroke-opacity="0.75"/><path d="M1019.500 762.500c2 2.500 3 5.500 2.600 8.500c-.3 2.200-1.300 4-1 6" fill="none" stroke="#6a0c12" stroke-width="2.200" stroke-opacity="0.6" stroke-linecap="round"/></g>
<g><path d="M1048.200 755.500C1052 753.200 1076.400 753.200 1080.200 755.500L1076.300 787.300C1073.500 792.300 1055 792.300 1052.100 787.300Z" fill="url(#trG)" fill-opacity="0.95"/><ellipse cx="1064.200" cy="755.600" rx="16" ry="3.400" fill="#f2f2f5"/><path d="M1051.500 755.500l3.300-4.700l4.200 2.600l3.500-3.800l4.500 3l4-3.300l3.500 3.400l3 2c-5 2.800-21 2.800-26 .8Z" fill="#fbfbfb"/><path d="M1055.500 754l3-2l2.500 2.800Z" fill="#3a3a40"/><path d="M1066.500 754.500l2.500-3l2.500 3.200Z" fill="#3a3a44"/><path d="M1060.500 752.800l3-1l.8 2.700Z" fill="#58b0e0"/><path d="M1062.500 751.800l1.800 .2l-.6 1.800Z" fill="#76c85a"/><path d="M1070.500 752.300l2.300 1.600l-2.800 .9Z" fill="#d8704a"/><path d="M1073 753l2 1.600l-2.400 .6Z" fill="#3a3a40"/><path d="M1056 762C1062 765 1070 764 1076 760" fill="none" stroke="#fff" stroke-opacity="0.5" stroke-width="2.500"/></g>
<defs>
<radialGradient id="kgB" cx="1209" cy="737" r="54" gradientUnits="userSpaceOnUse"><stop offset="0" stop-color="#9ffcff"/><stop offset="0.25" stop-color="#3ccdf4"/><stop offset="0.6" stop-color="#2f8fe0"/><stop offset="1" stop-color="#3f62c8"/></radialGradient>
<radialGradient id="kgG" cx="1203" cy="776" r="52" gradientUnits="userSpaceOnUse"><stop offset="0" stop-color="#1fa25a"/><stop offset="0.55" stop-color="#0f7a4a"/><stop offset="1" stop-color="#0e5a6a"/></radialGradient>
<radialGradient id="kgR" cx="1239" cy="729" r="66" gradientUnits="userSpaceOnUse"><stop offset="0" stop-color="#ffe46a"/><stop offset="0.2" stop-color="#f7a23a"/><stop offset="0.45" stop-color="#e0303c"/><stop offset="1" stop-color="#b01848"/></radialGradient>
<radialGradient id="kgP" cx="1212" cy="763" r="10" gradientUnits="userSpaceOnUse"><stop offset="0" stop-color="#c79af0" stop-opacity="0.95"/><stop offset="1" stop-color="#c79af0" stop-opacity="0"/></radialGradient>
<linearGradient id="kgS" x1="1180" y1="735" x2="1250" y2="795" gradientUnits="userSpaceOnUse"><stop offset="0" stop-color="#c8c8d0"/><stop offset="0.5" stop-color="#b4aed0"/><stop offset="1" stop-color="#7a6ab4"/></linearGradient>
<filter id="kgblur" x="-10%" y="-10%" width="120%" height="120%"><feGaussianBlur stdDeviation="0.7"/></filter>
</defs>
<g filter="url(#kgblur)">
<path d="M1170 728C1178 742 1190 748 1204 746C1216 743 1222 732 1228 722C1233 712 1238 704 1246 700C1252 703 1257 709 1259 716C1244 716 1226 728 1227 744C1232 762 1248 772 1242 796C1236 799 1226 798.500 1219 796.500C1227 788 1228 770 1222 757C1200 757 1172 754 1158 742C1160 735 1164 730 1170 728Z" fill="url(#kgS)" fill-opacity="0.62"/>
<path d="M1172 727C1170 700 1192 685 1217 685C1232 685 1244 691 1252 700C1242 702 1234 712 1228 722C1222 732 1214 744 1202 745C1190 744 1180 736 1172 727Z" fill="url(#kgB)" fill-opacity="0.5"/>
<path d="M1245 699.500C1236 705 1231 715 1225 725C1219 735 1212 742 1203 745" fill="none" stroke="#e2e2ea" stroke-opacity="0.75" stroke-width="5"/>
<path d="M1171 727C1175 736 1182 742 1190 745.500" fill="none" stroke="#e6e6ec" stroke-opacity="0.7" stroke-width="4.500"/>
<path d="M1192 745.500C1197 747 1203 746.500 1208 744" fill="none" stroke="#2a3a8a" stroke-opacity="0.55" stroke-width="2.500"/>
<path d="M1156.500 742C1170 754 1200 757 1223 757C1229 770 1228 786 1221 796C1213 799 1198 799 1188 795C1166 786 1151.500 765 1156.500 742Z" fill="url(#kgG)" fill-opacity="0.72"/>
<path d="M1158.500 737C1161 729 1166 723.500 1171.500 722.500C1169.500 732 1171 741 1176 749C1169 748 1162 745 1157.500 741Z" fill="#3ad23e" fill-opacity="0.7"/>
<circle cx="1212" cy="763" r="10" fill="url(#kgP)"/>
<path d="M1250 715C1235 716 1224 728 1226 742C1230 760 1246 770 1244 790C1243 794 1240 797 1236 798C1254 798 1272 786 1279 764C1282 744 1272 720 1250 715Z" fill="url(#kgR)" fill-opacity="0.7"/>
</g>
<text x="1236.500" y="751.600" font-size="31px" font-weight="700" fill="#f6dc8c" stroke="#c89a4a" stroke-width="1.300" stroke-linejoin="round" paint-order="stroke" textLength="24" lengthAdjust="spacingAndGlyphs">KG</text>
</svg>
</body>
</html>
